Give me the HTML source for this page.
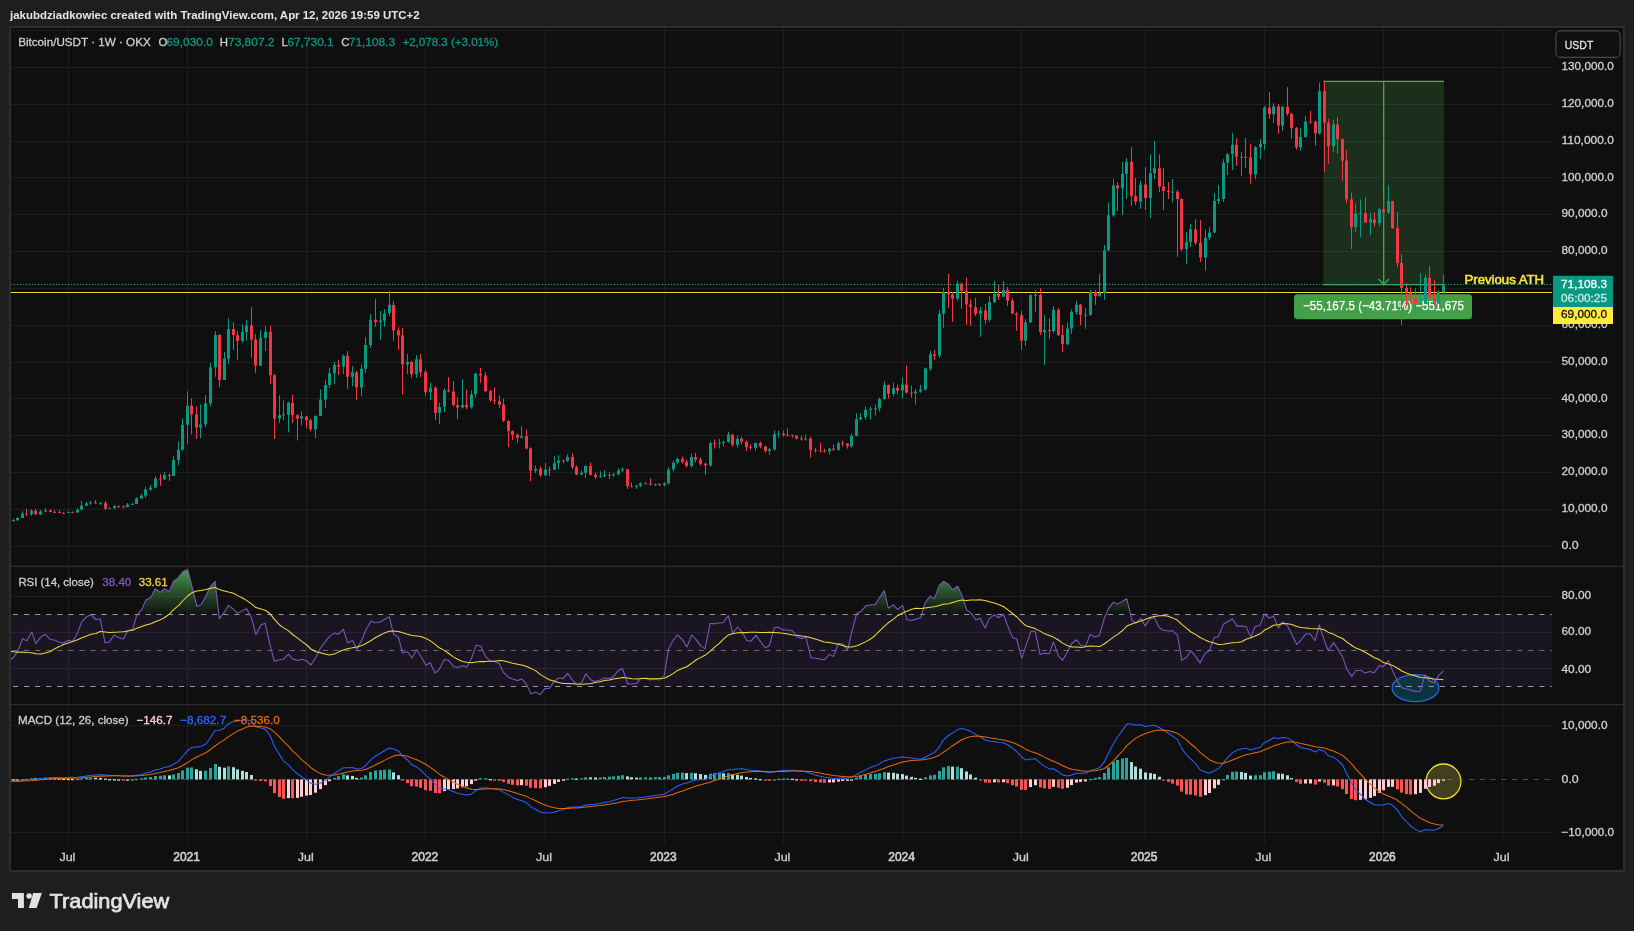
<!DOCTYPE html>
<html lang="en"><head><meta charset="utf-8"><title>BTC/USDT 1W chart</title>
<style>html,body{margin:0;padding:0;background:#1e1e1e;overflow:hidden}svg{display:block;will-change:transform}</style></head>
<body>
<svg width="1634" height="931" viewBox="0 0 1634 931" font-family="'Liberation Sans', sans-serif" style="display:block">
<defs>
<linearGradient id="ob" x1="0" y1="567" x2="0" y2="614.5" gradientUnits="userSpaceOnUse"><stop offset="0" stop-color="#4caf50" stop-opacity="0.95"/><stop offset="0.6" stop-color="#4caf50" stop-opacity="0.33"/><stop offset="1" stop-color="#4caf50" stop-opacity="0.02"/></linearGradient>
<clipPath id="cm"><rect x="11" y="28" width="1541" height="538"/></clipPath>
<clipPath id="cr"><rect x="11" y="567" width="1541" height="137"/></clipPath>
<clipPath id="cob"><rect x="11" y="567" width="1541" height="47.5"/></clipPath>
<clipPath id="cos"><rect x="11" y="686.8" width="1541" height="17.2"/></clipPath>
<clipPath id="cd"><rect x="11" y="705" width="1541" height="138"/></clipPath>
</defs>
<rect width="1634" height="931" fill="#1e1e1e"/>
<rect x="10" y="27" width="1614" height="844" fill="#0f0f0f" stroke="#2e2e2e" stroke-width="2"/>
<line x1="68.5" y1="28" x2="68.5" y2="843" stroke="#1e1e20" stroke-width="1"/>
<line x1="187.5" y1="28" x2="187.5" y2="843" stroke="#1e1e20" stroke-width="1"/>
<line x1="306.5" y1="28" x2="306.5" y2="843" stroke="#1e1e20" stroke-width="1"/>
<line x1="425.5" y1="28" x2="425.5" y2="843" stroke="#1e1e20" stroke-width="1"/>
<line x1="545.5" y1="28" x2="545.5" y2="843" stroke="#1e1e20" stroke-width="1"/>
<line x1="664.5" y1="28" x2="664.5" y2="843" stroke="#1e1e20" stroke-width="1"/>
<line x1="783.5" y1="28" x2="783.5" y2="843" stroke="#1e1e20" stroke-width="1"/>
<line x1="902.5" y1="28" x2="902.5" y2="843" stroke="#1e1e20" stroke-width="1"/>
<line x1="1021.5" y1="28" x2="1021.5" y2="843" stroke="#1e1e20" stroke-width="1"/>
<line x1="1145.5" y1="28" x2="1145.5" y2="843" stroke="#1e1e20" stroke-width="1"/>
<line x1="1264.5" y1="28" x2="1264.5" y2="843" stroke="#1e1e20" stroke-width="1"/>
<line x1="1383.5" y1="28" x2="1383.5" y2="843" stroke="#1e1e20" stroke-width="1"/>
<line x1="1502.5" y1="28" x2="1502.5" y2="843" stroke="#1e1e20" stroke-width="1"/>
<line x1="11" y1="546.5" x2="1552" y2="546.5" stroke="#1e1e20" stroke-width="1"/>
<line x1="11" y1="509.5" x2="1552" y2="509.5" stroke="#1e1e20" stroke-width="1"/>
<line x1="11" y1="472.5" x2="1552" y2="472.5" stroke="#1e1e20" stroke-width="1"/>
<line x1="11" y1="435.5" x2="1552" y2="435.5" stroke="#1e1e20" stroke-width="1"/>
<line x1="11" y1="398.5" x2="1552" y2="398.5" stroke="#1e1e20" stroke-width="1"/>
<line x1="11" y1="362.5" x2="1552" y2="362.5" stroke="#1e1e20" stroke-width="1"/>
<line x1="11" y1="325.5" x2="1552" y2="325.5" stroke="#1e1e20" stroke-width="1"/>
<line x1="11" y1="288.5" x2="1552" y2="288.5" stroke="#1e1e20" stroke-width="1"/>
<line x1="11" y1="251.5" x2="1552" y2="251.5" stroke="#1e1e20" stroke-width="1"/>
<line x1="11" y1="214.5" x2="1552" y2="214.5" stroke="#1e1e20" stroke-width="1"/>
<line x1="11" y1="177.5" x2="1552" y2="177.5" stroke="#1e1e20" stroke-width="1"/>
<line x1="11" y1="141.5" x2="1552" y2="141.5" stroke="#1e1e20" stroke-width="1"/>
<line x1="11" y1="104.5" x2="1552" y2="104.5" stroke="#1e1e20" stroke-width="1"/>
<line x1="11" y1="67.5" x2="1552" y2="67.5" stroke="#1e1e20" stroke-width="1"/>
<line x1="11" y1="30.5" x2="1552" y2="30.5" stroke="#1e1e20" stroke-width="1"/>
<line x1="11" y1="566.3" x2="1623" y2="566.3" stroke="#2e2e2e" stroke-width="1.2"/>
<line x1="11" y1="704.6" x2="1623" y2="704.6" stroke="#2e2e2e" stroke-width="1.2"/>
<rect x="1323.3" y="81.3" width="120.7" height="203.3" fill="#4caf50" fill-opacity="0.2"/>
<line x1="1323.3" y1="81.3" x2="1444.0" y2="81.3" stroke="#4caf50" stroke-width="1.2"/>
<line x1="1323.3" y1="284.6" x2="1444.0" y2="284.6" stroke="#4caf50" stroke-width="1.2"/>
<line x1="1383.7" y1="81.3" x2="1383.7" y2="284.6" stroke="#4caf50" stroke-width="1.2"/>
<path d="M1378.4 279.0 L1383.7 284.3 L1389.0 279.0" fill="none" stroke="#4caf50" stroke-width="1.2"/>
<rect x="1294" y="294.3" width="178" height="25" rx="3.5" fill="#43a047"/>
<text x="1303" y="310.2" font-size="12.3" fill="#fff" stroke="#fff" stroke-width="0.25" textLength="161" lengthAdjust="spacingAndGlyphs">−55,167.5 (−43.71%) −551,675</text>
<line x1="11" y1="292.5" x2="1552" y2="292.5" stroke="#050505" stroke-width="2.4"/>
<line x1="11" y1="292.5" x2="1552" y2="292.5" stroke="#f0dc3a" stroke-width="1.15"/>
<text x="1544" y="283.6" text-anchor="end" font-size="12.2" fill="#fbe43a" stroke="#fbe43a" stroke-width="0.55" textLength="79.5" lengthAdjust="spacingAndGlyphs">Previous ATH</text>
<g clip-path="url(#cm)"><line x1="13.50" y1="518.9" x2="13.50" y2="521.8" stroke="#089981" stroke-width="1"/><rect x="12.00" y="520.1" width="3" height="0.9" fill="#089981"/><line x1="17.50" y1="517.0" x2="17.50" y2="521.1" stroke="#089981" stroke-width="1"/><rect x="16.00" y="518.0" width="3" height="2.1" fill="#089981"/><line x1="22.50" y1="511.1" x2="22.50" y2="518.1" stroke="#089981" stroke-width="1"/><rect x="21.00" y="513.6" width="3" height="4.4" fill="#089981"/><line x1="26.50" y1="509.1" x2="26.50" y2="515.9" stroke="#f23645" stroke-width="1"/><rect x="25.00" y="513.6" width="3" height="0.9" fill="#f23645"/><line x1="31.50" y1="509.1" x2="31.50" y2="515.9" stroke="#089981" stroke-width="1"/><rect x="30.00" y="510.7" width="3" height="3.5" fill="#089981"/><line x1="35.50" y1="508.9" x2="35.50" y2="515.0" stroke="#f23645" stroke-width="1"/><rect x="34.00" y="510.7" width="3" height="3.5" fill="#f23645"/><line x1="40.50" y1="510.0" x2="40.50" y2="515.0" stroke="#089981" stroke-width="1"/><rect x="39.00" y="511.6" width="3" height="2.7" fill="#089981"/><line x1="45.50" y1="508.2" x2="45.50" y2="512.1" stroke="#089981" stroke-width="1"/><rect x="44.00" y="510.5" width="3" height="1.1" fill="#089981"/><line x1="50.50" y1="509.2" x2="50.50" y2="512.1" stroke="#f23645" stroke-width="1"/><rect x="49.00" y="510.5" width="3" height="1.5" fill="#f23645"/><line x1="54.50" y1="510.0" x2="54.50" y2="512.9" stroke="#f23645" stroke-width="1"/><rect x="53.00" y="512.0" width="3" height="0.9" fill="#f23645"/><line x1="59.50" y1="510.2" x2="59.50" y2="512.9" stroke="#f23645" stroke-width="1"/><rect x="58.00" y="512.1" width="3" height="0.9" fill="#f23645"/><line x1="63.50" y1="512.1" x2="63.50" y2="513.0" stroke="#f23645" stroke-width="1"/><rect x="62.00" y="512.8" width="3" height="0.9" fill="#f23645"/><line x1="68.50" y1="511.3" x2="68.50" y2="513.0" stroke="#089981" stroke-width="1"/><rect x="67.00" y="512.1" width="3" height="0.9" fill="#089981"/><line x1="72.50" y1="511.3" x2="72.50" y2="512.5" stroke="#f23645" stroke-width="1"/><rect x="71.00" y="512.1" width="3" height="0.9" fill="#f23645"/><line x1="77.50" y1="508.2" x2="77.50" y2="513.1" stroke="#089981" stroke-width="1"/><rect x="76.00" y="509.8" width="3" height="2.7" fill="#089981"/><line x1="81.50" y1="501.0" x2="81.50" y2="510.0" stroke="#089981" stroke-width="1"/><rect x="80.00" y="505.6" width="3" height="4.2" fill="#089981"/><line x1="86.50" y1="502.1" x2="86.50" y2="505.9" stroke="#089981" stroke-width="1"/><rect x="85.00" y="503.4" width="3" height="2.2" fill="#089981"/><line x1="90.50" y1="501.0" x2="90.50" y2="504.9" stroke="#089981" stroke-width="1"/><rect x="89.00" y="502.5" width="3" height="0.9" fill="#089981"/><line x1="95.50" y1="500.0" x2="95.50" y2="503.8" stroke="#f23645" stroke-width="1"/><rect x="94.00" y="502.5" width="3" height="0.9" fill="#f23645"/><line x1="100.50" y1="502.2" x2="100.50" y2="504.9" stroke="#089981" stroke-width="1"/><rect x="99.00" y="503.2" width="3" height="0.9" fill="#089981"/><line x1="105.50" y1="500.8" x2="105.50" y2="510.0" stroke="#f23645" stroke-width="1"/><rect x="104.00" y="503.2" width="3" height="5.4" fill="#f23645"/><line x1="109.50" y1="507.3" x2="109.50" y2="508.9" stroke="#089981" stroke-width="1"/><rect x="108.00" y="508.3" width="3" height="0.9" fill="#089981"/><line x1="114.50" y1="504.8" x2="114.50" y2="508.8" stroke="#089981" stroke-width="1"/><rect x="113.00" y="506.2" width="3" height="2.2" fill="#089981"/><line x1="118.50" y1="505.4" x2="118.50" y2="507.8" stroke="#f23645" stroke-width="1"/><rect x="117.00" y="506.2" width="3" height="0.9" fill="#f23645"/><line x1="123.50" y1="505.4" x2="123.50" y2="507.8" stroke="#f23645" stroke-width="1"/><rect x="122.00" y="506.7" width="3" height="0.9" fill="#f23645"/><line x1="127.50" y1="503.0" x2="127.50" y2="507.1" stroke="#089981" stroke-width="1"/><rect x="126.00" y="504.5" width="3" height="2.6" fill="#089981"/><line x1="132.50" y1="503.0" x2="132.50" y2="504.9" stroke="#089981" stroke-width="1"/><rect x="131.00" y="504.0" width="3" height="0.9" fill="#089981"/><line x1="136.50" y1="497.1" x2="136.50" y2="504.0" stroke="#089981" stroke-width="1"/><rect x="135.00" y="498.4" width="3" height="5.6" fill="#089981"/><line x1="141.50" y1="493.8" x2="141.50" y2="498.9" stroke="#089981" stroke-width="1"/><rect x="140.00" y="495.7" width="3" height="2.7" fill="#089981"/><line x1="145.50" y1="486.8" x2="145.50" y2="497.8" stroke="#089981" stroke-width="1"/><rect x="144.00" y="489.4" width="3" height="6.3" fill="#089981"/><line x1="150.50" y1="484.9" x2="150.50" y2="490.9" stroke="#089981" stroke-width="1"/><rect x="149.00" y="487.6" width="3" height="1.8" fill="#089981"/><line x1="155.50" y1="476.1" x2="155.50" y2="487.9" stroke="#089981" stroke-width="1"/><rect x="154.00" y="478.6" width="3" height="9.0" fill="#089981"/><line x1="160.50" y1="473.9" x2="160.50" y2="486.0" stroke="#f23645" stroke-width="1"/><rect x="159.00" y="478.6" width="3" height="0.9" fill="#f23645"/><line x1="164.50" y1="472.0" x2="164.50" y2="479.9" stroke="#089981" stroke-width="1"/><rect x="163.00" y="475.1" width="3" height="4.3" fill="#089981"/><line x1="169.50" y1="473.7" x2="169.50" y2="480.9" stroke="#f23645" stroke-width="1"/><rect x="168.00" y="475.1" width="3" height="0.9" fill="#f23645"/><line x1="173.50" y1="456.0" x2="173.50" y2="475.9" stroke="#089981" stroke-width="1"/><rect x="172.00" y="460.0" width="3" height="15.8" fill="#089981"/><line x1="178.50" y1="441.4" x2="178.50" y2="465.1" stroke="#089981" stroke-width="1"/><rect x="177.00" y="449.7" width="3" height="10.3" fill="#089981"/><line x1="182.50" y1="418.4" x2="182.50" y2="451.1" stroke="#089981" stroke-width="1"/><rect x="181.00" y="424.8" width="3" height="24.9" fill="#089981"/><line x1="187.50" y1="391.3" x2="187.50" y2="444.2" stroke="#089981" stroke-width="1"/><rect x="186.00" y="405.7" width="3" height="19.1" fill="#089981"/><line x1="191.50" y1="398.5" x2="191.50" y2="434.2" stroke="#f23645" stroke-width="1"/><rect x="190.00" y="405.7" width="3" height="8.7" fill="#f23645"/><line x1="196.50" y1="406.3" x2="196.50" y2="439.1" stroke="#f23645" stroke-width="1"/><rect x="195.00" y="414.4" width="3" height="13.2" fill="#f23645"/><line x1="200.50" y1="404.5" x2="200.50" y2="438.2" stroke="#089981" stroke-width="1"/><rect x="199.00" y="424.5" width="3" height="3.1" fill="#089981"/><line x1="205.50" y1="395.2" x2="205.50" y2="427.3" stroke="#089981" stroke-width="1"/><rect x="204.00" y="403.4" width="3" height="21.0" fill="#089981"/><line x1="210.50" y1="363.0" x2="210.50" y2="406.3" stroke="#089981" stroke-width="1"/><rect x="209.00" y="367.4" width="3" height="36.0" fill="#089981"/><line x1="215.50" y1="331.1" x2="215.50" y2="376.7" stroke="#089981" stroke-width="1"/><rect x="214.00" y="334.9" width="3" height="32.5" fill="#089981"/><line x1="219.50" y1="334.1" x2="219.50" y2="387.3" stroke="#f23645" stroke-width="1"/><rect x="218.00" y="334.9" width="3" height="45.2" fill="#f23645"/><line x1="224.50" y1="352.1" x2="224.50" y2="380.1" stroke="#089981" stroke-width="1"/><rect x="223.00" y="358.6" width="3" height="21.4" fill="#089981"/><line x1="228.50" y1="318.2" x2="228.50" y2="363.9" stroke="#089981" stroke-width="1"/><rect x="227.00" y="329.0" width="3" height="29.7" fill="#089981"/><line x1="233.50" y1="322.1" x2="233.50" y2="349.9" stroke="#f23645" stroke-width="1"/><rect x="232.00" y="329.0" width="3" height="6.1" fill="#f23645"/><line x1="237.50" y1="331.1" x2="237.50" y2="359.8" stroke="#f23645" stroke-width="1"/><rect x="236.00" y="335.1" width="3" height="5.8" fill="#f23645"/><line x1="242.50" y1="324.2" x2="242.50" y2="342.9" stroke="#089981" stroke-width="1"/><rect x="241.00" y="331.9" width="3" height="8.9" fill="#089981"/><line x1="246.50" y1="320.2" x2="246.50" y2="340.7" stroke="#089981" stroke-width="1"/><rect x="245.00" y="325.4" width="3" height="6.6" fill="#089981"/><line x1="251.50" y1="307.1" x2="251.50" y2="357.9" stroke="#f23645" stroke-width="1"/><rect x="250.00" y="325.4" width="3" height="14.1" fill="#f23645"/><line x1="255.50" y1="334.1" x2="255.50" y2="372.9" stroke="#f23645" stroke-width="1"/><rect x="254.00" y="339.5" width="3" height="26.1" fill="#f23645"/><line x1="260.50" y1="330.0" x2="260.50" y2="366.0" stroke="#089981" stroke-width="1"/><rect x="259.00" y="337.9" width="3" height="27.7" fill="#089981"/><line x1="265.50" y1="326.0" x2="265.50" y2="351.0" stroke="#089981" stroke-width="1"/><rect x="264.00" y="331.8" width="3" height="6.1" fill="#089981"/><line x1="270.50" y1="326.0" x2="270.50" y2="384.3" stroke="#f23645" stroke-width="1"/><rect x="269.00" y="331.8" width="3" height="43.5" fill="#f23645"/><line x1="274.50" y1="373.9" x2="274.50" y2="439.1" stroke="#f23645" stroke-width="1"/><rect x="273.00" y="375.3" width="3" height="43.4" fill="#f23645"/><line x1="279.50" y1="395.2" x2="279.50" y2="423.2" stroke="#089981" stroke-width="1"/><rect x="278.00" y="415.1" width="3" height="3.6" fill="#089981"/><line x1="283.50" y1="400.4" x2="283.50" y2="420.3" stroke="#089981" stroke-width="1"/><rect x="282.00" y="414.5" width="3" height="0.9" fill="#089981"/><line x1="288.50" y1="401.5" x2="288.50" y2="432.4" stroke="#089981" stroke-width="1"/><rect x="287.00" y="402.7" width="3" height="11.8" fill="#089981"/><line x1="292.50" y1="394.5" x2="292.50" y2="423.2" stroke="#f23645" stroke-width="1"/><rect x="291.00" y="402.7" width="3" height="12.5" fill="#f23645"/><line x1="297.50" y1="414.4" x2="297.50" y2="440.4" stroke="#f23645" stroke-width="1"/><rect x="296.00" y="415.2" width="3" height="3.4" fill="#f23645"/><line x1="301.50" y1="411.4" x2="301.50" y2="425.3" stroke="#089981" stroke-width="1"/><rect x="300.00" y="416.4" width="3" height="2.2" fill="#089981"/><line x1="306.50" y1="416.3" x2="306.50" y2="428.3" stroke="#f23645" stroke-width="1"/><rect x="305.00" y="416.4" width="3" height="3.8" fill="#f23645"/><line x1="310.50" y1="418.4" x2="310.50" y2="431.3" stroke="#f23645" stroke-width="1"/><rect x="309.00" y="420.2" width="3" height="9.1" fill="#f23645"/><line x1="315.50" y1="415.2" x2="315.50" y2="438.2" stroke="#089981" stroke-width="1"/><rect x="314.00" y="416.0" width="3" height="13.3" fill="#089981"/><line x1="320.50" y1="389.4" x2="320.50" y2="416.3" stroke="#089981" stroke-width="1"/><rect x="319.00" y="399.6" width="3" height="16.4" fill="#089981"/><line x1="325.50" y1="379.4" x2="325.50" y2="408.1" stroke="#089981" stroke-width="1"/><rect x="324.00" y="385.0" width="3" height="14.6" fill="#089981"/><line x1="329.50" y1="367.8" x2="329.50" y2="388.0" stroke="#089981" stroke-width="1"/><rect x="328.00" y="373.2" width="3" height="11.8" fill="#089981"/><line x1="334.50" y1="361.9" x2="334.50" y2="384.3" stroke="#089981" stroke-width="1"/><rect x="333.00" y="364.9" width="3" height="8.3" fill="#089981"/><line x1="338.50" y1="359.8" x2="338.50" y2="375.0" stroke="#f23645" stroke-width="1"/><rect x="337.00" y="364.9" width="3" height="1.8" fill="#f23645"/><line x1="343.50" y1="354.4" x2="343.50" y2="374.0" stroke="#089981" stroke-width="1"/><rect x="342.00" y="355.7" width="3" height="11.0" fill="#089981"/><line x1="347.50" y1="351.1" x2="347.50" y2="389.0" stroke="#f23645" stroke-width="1"/><rect x="346.00" y="355.7" width="3" height="21.1" fill="#f23645"/><line x1="352.50" y1="366.2" x2="352.50" y2="386.0" stroke="#089981" stroke-width="1"/><rect x="351.00" y="372.3" width="3" height="4.5" fill="#089981"/><line x1="356.50" y1="371.0" x2="356.50" y2="400.3" stroke="#f23645" stroke-width="1"/><rect x="355.00" y="372.3" width="3" height="15.0" fill="#f23645"/><line x1="361.50" y1="364.4" x2="361.50" y2="396.3" stroke="#089981" stroke-width="1"/><rect x="360.00" y="368.8" width="3" height="18.6" fill="#089981"/><line x1="365.50" y1="337.1" x2="365.50" y2="373.0" stroke="#089981" stroke-width="1"/><rect x="364.00" y="345.0" width="3" height="23.8" fill="#089981"/><line x1="370.50" y1="314.0" x2="370.50" y2="347.9" stroke="#089981" stroke-width="1"/><rect x="369.00" y="319.8" width="3" height="25.2" fill="#089981"/><line x1="375.50" y1="298.9" x2="375.50" y2="326.9" stroke="#f23645" stroke-width="1"/><rect x="374.00" y="319.8" width="3" height="2.4" fill="#f23645"/><line x1="380.50" y1="311.0" x2="380.50" y2="340.0" stroke="#089981" stroke-width="1"/><rect x="379.00" y="320.5" width="3" height="1.6" fill="#089981"/><line x1="384.50" y1="309.2" x2="384.50" y2="326.9" stroke="#089981" stroke-width="1"/><rect x="383.00" y="313.3" width="3" height="7.3" fill="#089981"/><line x1="389.50" y1="290.9" x2="389.50" y2="316.2" stroke="#089981" stroke-width="1"/><rect x="388.00" y="305.0" width="3" height="8.2" fill="#089981"/><line x1="393.50" y1="301.1" x2="393.50" y2="340.9" stroke="#f23645" stroke-width="1"/><rect x="392.00" y="305.0" width="3" height="25.4" fill="#f23645"/><line x1="398.50" y1="327.1" x2="398.50" y2="350.0" stroke="#f23645" stroke-width="1"/><rect x="397.00" y="330.4" width="3" height="5.0" fill="#f23645"/><line x1="402.50" y1="328.0" x2="402.50" y2="394.2" stroke="#f23645" stroke-width="1"/><rect x="401.00" y="335.4" width="3" height="29.0" fill="#f23645"/><line x1="407.50" y1="354.0" x2="407.50" y2="374.0" stroke="#089981" stroke-width="1"/><rect x="406.00" y="362.0" width="3" height="2.4" fill="#089981"/><line x1="411.50" y1="360.9" x2="411.50" y2="378.0" stroke="#f23645" stroke-width="1"/><rect x="410.00" y="362.0" width="3" height="12.4" fill="#f23645"/><line x1="416.50" y1="355.1" x2="416.50" y2="378.0" stroke="#089981" stroke-width="1"/><rect x="415.00" y="359.3" width="3" height="15.1" fill="#089981"/><line x1="420.50" y1="354.0" x2="420.50" y2="376.9" stroke="#f23645" stroke-width="1"/><rect x="419.00" y="359.3" width="3" height="12.9" fill="#f23645"/><line x1="425.50" y1="370.0" x2="425.50" y2="396.3" stroke="#f23645" stroke-width="1"/><rect x="424.00" y="372.1" width="3" height="20.0" fill="#f23645"/><line x1="430.50" y1="382.5" x2="430.50" y2="400.3" stroke="#089981" stroke-width="1"/><rect x="429.00" y="387.7" width="3" height="4.5" fill="#089981"/><line x1="435.50" y1="386.3" x2="435.50" y2="420.2" stroke="#f23645" stroke-width="1"/><rect x="434.00" y="387.7" width="3" height="25.2" fill="#f23645"/><line x1="439.50" y1="402.4" x2="439.50" y2="424.3" stroke="#089981" stroke-width="1"/><rect x="438.00" y="406.8" width="3" height="6.0" fill="#089981"/><line x1="444.50" y1="388.5" x2="444.50" y2="412.1" stroke="#089981" stroke-width="1"/><rect x="443.00" y="390.2" width="3" height="16.6" fill="#089981"/><line x1="448.50" y1="376.9" x2="448.50" y2="392.4" stroke="#f23645" stroke-width="1"/><rect x="447.00" y="390.2" width="3" height="1.2" fill="#f23645"/><line x1="453.50" y1="381.3" x2="453.50" y2="406.4" stroke="#f23645" stroke-width="1"/><rect x="452.00" y="391.4" width="3" height="13.6" fill="#f23645"/><line x1="457.50" y1="397.4" x2="457.50" y2="419.3" stroke="#f23645" stroke-width="1"/><rect x="456.00" y="405.1" width="3" height="2.4" fill="#f23645"/><line x1="462.50" y1="379.1" x2="462.50" y2="408.6" stroke="#089981" stroke-width="1"/><rect x="461.00" y="404.9" width="3" height="2.6" fill="#089981"/><line x1="466.50" y1="389.5" x2="466.50" y2="409.4" stroke="#f23645" stroke-width="1"/><rect x="465.00" y="404.9" width="3" height="2.3" fill="#f23645"/><line x1="471.50" y1="390.3" x2="471.50" y2="408.6" stroke="#089981" stroke-width="1"/><rect x="470.00" y="394.4" width="3" height="12.8" fill="#089981"/><line x1="475.50" y1="372.9" x2="475.50" y2="397.4" stroke="#089981" stroke-width="1"/><rect x="474.00" y="373.8" width="3" height="20.5" fill="#089981"/><line x1="480.50" y1="368.0" x2="480.50" y2="383.1" stroke="#f23645" stroke-width="1"/><rect x="479.00" y="373.8" width="3" height="1.6" fill="#f23645"/><line x1="485.50" y1="372.1" x2="485.50" y2="392.2" stroke="#f23645" stroke-width="1"/><rect x="484.00" y="375.4" width="3" height="15.7" fill="#f23645"/><line x1="490.50" y1="389.9" x2="490.50" y2="401.7" stroke="#f23645" stroke-width="1"/><rect x="489.00" y="391.1" width="3" height="9.1" fill="#f23645"/><line x1="494.50" y1="387.4" x2="494.50" y2="404.3" stroke="#f23645" stroke-width="1"/><rect x="493.00" y="400.2" width="3" height="0.9" fill="#f23645"/><line x1="499.50" y1="395.4" x2="499.50" y2="408.4" stroke="#f23645" stroke-width="1"/><rect x="498.00" y="401.1" width="3" height="3.6" fill="#f23645"/><line x1="503.50" y1="398.5" x2="503.50" y2="422.3" stroke="#f23645" stroke-width="1"/><rect x="502.00" y="404.6" width="3" height="16.3" fill="#f23645"/><line x1="508.50" y1="420.2" x2="508.50" y2="447.1" stroke="#f23645" stroke-width="1"/><rect x="507.00" y="421.0" width="3" height="10.1" fill="#f23645"/><line x1="512.50" y1="430.2" x2="512.50" y2="440.1" stroke="#f23645" stroke-width="1"/><rect x="511.00" y="431.1" width="3" height="3.7" fill="#f23645"/><line x1="517.50" y1="433.4" x2="517.50" y2="443.0" stroke="#f23645" stroke-width="1"/><rect x="516.00" y="434.8" width="3" height="3.0" fill="#f23645"/><line x1="521.50" y1="426.2" x2="521.50" y2="438.2" stroke="#089981" stroke-width="1"/><rect x="520.00" y="436.2" width="3" height="1.6" fill="#089981"/><line x1="526.50" y1="429.4" x2="526.50" y2="449.3" stroke="#f23645" stroke-width="1"/><rect x="525.00" y="436.2" width="3" height="12.3" fill="#f23645"/><line x1="530.50" y1="447.3" x2="530.50" y2="481.3" stroke="#f23645" stroke-width="1"/><rect x="529.00" y="448.5" width="3" height="22.1" fill="#f23645"/><line x1="535.50" y1="465.4" x2="535.50" y2="473.1" stroke="#089981" stroke-width="1"/><rect x="534.00" y="468.9" width="3" height="1.7" fill="#089981"/><line x1="540.50" y1="466.5" x2="540.50" y2="477.0" stroke="#f23645" stroke-width="1"/><rect x="539.00" y="468.9" width="3" height="6.4" fill="#f23645"/><line x1="545.50" y1="463.2" x2="545.50" y2="476.3" stroke="#089981" stroke-width="1"/><rect x="544.00" y="469.5" width="3" height="5.7" fill="#089981"/><line x1="549.50" y1="466.5" x2="549.50" y2="476.1" stroke="#f23645" stroke-width="1"/><rect x="548.00" y="469.5" width="3" height="0.9" fill="#f23645"/><line x1="554.50" y1="456.3" x2="554.50" y2="470.1" stroke="#089981" stroke-width="1"/><rect x="553.00" y="463.2" width="3" height="6.6" fill="#089981"/><line x1="558.50" y1="455.2" x2="558.50" y2="469.1" stroke="#089981" stroke-width="1"/><rect x="557.00" y="460.5" width="3" height="2.7" fill="#089981"/><line x1="563.50" y1="459.5" x2="563.50" y2="463.2" stroke="#f23645" stroke-width="1"/><rect x="562.00" y="460.5" width="3" height="0.9" fill="#f23645"/><line x1="567.50" y1="454.4" x2="567.50" y2="462.2" stroke="#089981" stroke-width="1"/><rect x="566.00" y="456.9" width="3" height="4.2" fill="#089981"/><line x1="572.50" y1="453.4" x2="572.50" y2="469.1" stroke="#f23645" stroke-width="1"/><rect x="571.00" y="456.9" width="3" height="10.2" fill="#f23645"/><line x1="576.50" y1="465.4" x2="576.50" y2="475.3" stroke="#f23645" stroke-width="1"/><rect x="575.00" y="467.1" width="3" height="7.3" fill="#f23645"/><line x1="581.50" y1="470.2" x2="581.50" y2="475.3" stroke="#089981" stroke-width="1"/><rect x="580.00" y="472.7" width="3" height="1.7" fill="#089981"/><line x1="585.50" y1="465.2" x2="585.50" y2="478.1" stroke="#089981" stroke-width="1"/><rect x="584.00" y="466.0" width="3" height="6.7" fill="#089981"/><line x1="590.50" y1="462.4" x2="590.50" y2="475.3" stroke="#f23645" stroke-width="1"/><rect x="589.00" y="466.0" width="3" height="8.9" fill="#f23645"/><line x1="595.50" y1="472.4" x2="595.50" y2="479.1" stroke="#f23645" stroke-width="1"/><rect x="594.00" y="474.8" width="3" height="2.3" fill="#f23645"/><line x1="600.50" y1="471.3" x2="600.50" y2="478.1" stroke="#089981" stroke-width="1"/><rect x="599.00" y="476.2" width="3" height="0.9" fill="#089981"/><line x1="604.50" y1="470.2" x2="604.50" y2="477.2" stroke="#089981" stroke-width="1"/><rect x="603.00" y="474.8" width="3" height="1.4" fill="#089981"/><line x1="609.50" y1="472.4" x2="609.50" y2="479.1" stroke="#f23645" stroke-width="1"/><rect x="608.00" y="474.8" width="3" height="0.9" fill="#f23645"/><line x1="613.50" y1="473.1" x2="613.50" y2="477.2" stroke="#089981" stroke-width="1"/><rect x="612.00" y="474.3" width="3" height="1.1" fill="#089981"/><line x1="618.50" y1="468.4" x2="618.50" y2="475.3" stroke="#089981" stroke-width="1"/><rect x="617.00" y="470.4" width="3" height="3.9" fill="#089981"/><line x1="622.50" y1="467.3" x2="622.50" y2="472.0" stroke="#089981" stroke-width="1"/><rect x="621.00" y="469.3" width="3" height="1.1" fill="#089981"/><line x1="627.50" y1="468.6" x2="627.50" y2="489.0" stroke="#f23645" stroke-width="1"/><rect x="626.00" y="469.3" width="3" height="16.9" fill="#f23645"/><line x1="631.50" y1="482.4" x2="631.50" y2="487.3" stroke="#f23645" stroke-width="1"/><rect x="630.00" y="486.2" width="3" height="0.9" fill="#f23645"/><line x1="636.50" y1="484.5" x2="636.50" y2="489.0" stroke="#089981" stroke-width="1"/><rect x="635.00" y="485.9" width="3" height="0.9" fill="#089981"/><line x1="640.50" y1="482.4" x2="640.50" y2="487.1" stroke="#089981" stroke-width="1"/><rect x="639.00" y="483.3" width="3" height="2.6" fill="#089981"/><line x1="645.50" y1="482.4" x2="645.50" y2="484.2" stroke="#f23645" stroke-width="1"/><rect x="644.00" y="483.3" width="3" height="0.9" fill="#f23645"/><line x1="650.50" y1="478.3" x2="650.50" y2="485.5" stroke="#f23645" stroke-width="1"/><rect x="649.00" y="483.4" width="3" height="1.3" fill="#f23645"/><line x1="655.50" y1="483.4" x2="655.50" y2="486.0" stroke="#089981" stroke-width="1"/><rect x="654.00" y="484.3" width="3" height="0.9" fill="#089981"/><line x1="659.50" y1="483.4" x2="659.50" y2="486.0" stroke="#f23645" stroke-width="1"/><rect x="658.00" y="484.3" width="3" height="0.9" fill="#f23645"/><line x1="664.50" y1="482.4" x2="664.50" y2="486.2" stroke="#089981" stroke-width="1"/><rect x="663.00" y="483.3" width="3" height="1.9" fill="#089981"/><line x1="668.50" y1="467.3" x2="668.50" y2="484.4" stroke="#089981" stroke-width="1"/><rect x="667.00" y="469.5" width="3" height="13.8" fill="#089981"/><line x1="673.50" y1="460.6" x2="673.50" y2="471.5" stroke="#089981" stroke-width="1"/><rect x="672.00" y="462.7" width="3" height="6.7" fill="#089981"/><line x1="677.50" y1="457.5" x2="677.50" y2="463.7" stroke="#089981" stroke-width="1"/><rect x="676.00" y="458.9" width="3" height="3.8" fill="#089981"/><line x1="682.50" y1="456.5" x2="682.50" y2="463.5" stroke="#f23645" stroke-width="1"/><rect x="681.00" y="458.9" width="3" height="3.0" fill="#f23645"/><line x1="686.50" y1="459.7" x2="686.50" y2="467.4" stroke="#f23645" stroke-width="1"/><rect x="685.00" y="461.9" width="3" height="4.2" fill="#f23645"/><line x1="691.50" y1="453.5" x2="691.50" y2="467.4" stroke="#089981" stroke-width="1"/><rect x="690.00" y="457.0" width="3" height="9.1" fill="#089981"/><line x1="695.50" y1="452.7" x2="695.50" y2="462.4" stroke="#f23645" stroke-width="1"/><rect x="694.00" y="457.0" width="3" height="2.6" fill="#f23645"/><line x1="700.50" y1="457.5" x2="700.50" y2="465.6" stroke="#f23645" stroke-width="1"/><rect x="699.00" y="459.6" width="3" height="4.2" fill="#f23645"/><line x1="705.50" y1="462.7" x2="705.50" y2="474.5" stroke="#f23645" stroke-width="1"/><rect x="704.00" y="463.7" width="3" height="1.6" fill="#f23645"/><line x1="710.50" y1="441.7" x2="710.50" y2="466.6" stroke="#089981" stroke-width="1"/><rect x="709.00" y="443.2" width="3" height="22.1" fill="#089981"/><line x1="714.50" y1="439.5" x2="714.50" y2="448.4" stroke="#f23645" stroke-width="1"/><rect x="713.00" y="443.2" width="3" height="0.9" fill="#f23645"/><line x1="719.50" y1="438.8" x2="719.50" y2="448.4" stroke="#089981" stroke-width="1"/><rect x="718.00" y="442.6" width="3" height="0.9" fill="#089981"/><line x1="723.50" y1="440.6" x2="723.50" y2="446.6" stroke="#089981" stroke-width="1"/><rect x="722.00" y="442.0" width="3" height="0.9" fill="#089981"/><line x1="728.50" y1="431.6" x2="728.50" y2="442.7" stroke="#089981" stroke-width="1"/><rect x="727.00" y="434.7" width="3" height="7.3" fill="#089981"/><line x1="732.50" y1="433.7" x2="732.50" y2="446.6" stroke="#f23645" stroke-width="1"/><rect x="731.00" y="434.7" width="3" height="10.0" fill="#f23645"/><line x1="737.50" y1="435.5" x2="737.50" y2="447.7" stroke="#089981" stroke-width="1"/><rect x="736.00" y="438.7" width="3" height="6.0" fill="#089981"/><line x1="741.50" y1="436.6" x2="741.50" y2="444.4" stroke="#f23645" stroke-width="1"/><rect x="740.00" y="438.7" width="3" height="2.9" fill="#f23645"/><line x1="746.50" y1="440.6" x2="746.50" y2="451.3" stroke="#f23645" stroke-width="1"/><rect x="745.00" y="441.6" width="3" height="5.6" fill="#f23645"/><line x1="750.50" y1="444.4" x2="750.50" y2="449.5" stroke="#f23645" stroke-width="1"/><rect x="749.00" y="447.2" width="3" height="0.9" fill="#f23645"/><line x1="755.50" y1="442.5" x2="755.50" y2="450.6" stroke="#089981" stroke-width="1"/><rect x="754.00" y="443.0" width="3" height="4.9" fill="#089981"/><line x1="760.50" y1="441.4" x2="760.50" y2="448.4" stroke="#f23645" stroke-width="1"/><rect x="759.00" y="443.0" width="3" height="3.5" fill="#f23645"/><line x1="765.50" y1="445.7" x2="765.50" y2="452.7" stroke="#f23645" stroke-width="1"/><rect x="764.00" y="446.5" width="3" height="4.4" fill="#f23645"/><line x1="769.50" y1="447.7" x2="769.50" y2="454.5" stroke="#089981" stroke-width="1"/><rect x="768.00" y="449.3" width="3" height="1.5" fill="#089981"/><line x1="774.50" y1="430.7" x2="774.50" y2="450.8" stroke="#089981" stroke-width="1"/><rect x="773.00" y="434.1" width="3" height="15.2" fill="#089981"/><line x1="778.50" y1="430.7" x2="778.50" y2="437.7" stroke="#089981" stroke-width="1"/><rect x="777.00" y="433.6" width="3" height="0.9" fill="#089981"/><line x1="783.50" y1="430.7" x2="783.50" y2="436.6" stroke="#f23645" stroke-width="1"/><rect x="782.00" y="433.6" width="3" height="1.7" fill="#f23645"/><line x1="787.50" y1="428.5" x2="787.50" y2="436.6" stroke="#089981" stroke-width="1"/><rect x="786.00" y="435.0" width="3" height="0.9" fill="#089981"/><line x1="792.50" y1="434.6" x2="792.50" y2="437.7" stroke="#f23645" stroke-width="1"/><rect x="791.00" y="435.0" width="3" height="0.9" fill="#f23645"/><line x1="796.50" y1="435.5" x2="796.50" y2="439.7" stroke="#f23645" stroke-width="1"/><rect x="795.00" y="435.6" width="3" height="2.9" fill="#f23645"/><line x1="801.50" y1="435.5" x2="801.50" y2="440.6" stroke="#f23645" stroke-width="1"/><rect x="800.00" y="438.5" width="3" height="0.9" fill="#f23645"/><line x1="805.50" y1="434.5" x2="805.50" y2="440.6" stroke="#089981" stroke-width="1"/><rect x="804.00" y="438.5" width="3" height="0.9" fill="#089981"/><line x1="810.50" y1="436.6" x2="810.50" y2="457.5" stroke="#f23645" stroke-width="1"/><rect x="809.00" y="438.5" width="3" height="11.4" fill="#f23645"/><line x1="815.50" y1="447.7" x2="815.50" y2="452.7" stroke="#f23645" stroke-width="1"/><rect x="814.00" y="449.9" width="3" height="0.9" fill="#f23645"/><line x1="820.50" y1="442.5" x2="820.50" y2="452.7" stroke="#f23645" stroke-width="1"/><rect x="819.00" y="450.3" width="3" height="0.9" fill="#f23645"/><line x1="824.50" y1="448.7" x2="824.50" y2="452.7" stroke="#f23645" stroke-width="1"/><rect x="823.00" y="450.7" width="3" height="0.9" fill="#f23645"/><line x1="829.50" y1="447.7" x2="829.50" y2="454.5" stroke="#089981" stroke-width="1"/><rect x="828.00" y="448.6" width="3" height="2.6" fill="#089981"/><line x1="833.50" y1="444.4" x2="833.50" y2="450.8" stroke="#f23645" stroke-width="1"/><rect x="832.00" y="448.6" width="3" height="1.0" fill="#f23645"/><line x1="838.50" y1="441.6" x2="838.50" y2="450.8" stroke="#089981" stroke-width="1"/><rect x="837.00" y="443.3" width="3" height="6.4" fill="#089981"/><line x1="842.50" y1="440.6" x2="842.50" y2="446.5" stroke="#f23645" stroke-width="1"/><rect x="841.00" y="443.3" width="3" height="0.9" fill="#f23645"/><line x1="847.50" y1="443.3" x2="847.50" y2="448.6" stroke="#f23645" stroke-width="1"/><rect x="846.00" y="443.5" width="3" height="2.8" fill="#f23645"/><line x1="851.50" y1="433.6" x2="851.50" y2="447.8" stroke="#089981" stroke-width="1"/><rect x="850.00" y="435.9" width="3" height="10.4" fill="#089981"/><line x1="856.50" y1="413.4" x2="856.50" y2="436.8" stroke="#089981" stroke-width="1"/><rect x="855.00" y="419.2" width="3" height="16.7" fill="#089981"/><line x1="860.50" y1="413.4" x2="860.50" y2="420.7" stroke="#089981" stroke-width="1"/><rect x="859.00" y="417.3" width="3" height="1.9" fill="#089981"/><line x1="865.50" y1="406.5" x2="865.50" y2="419.6" stroke="#089981" stroke-width="1"/><rect x="864.00" y="409.8" width="3" height="7.5" fill="#089981"/><line x1="870.50" y1="406.5" x2="870.50" y2="419.6" stroke="#089981" stroke-width="1"/><rect x="869.00" y="408.7" width="3" height="1.1" fill="#089981"/><line x1="875.50" y1="404.6" x2="875.50" y2="415.5" stroke="#089981" stroke-width="1"/><rect x="874.00" y="408.4" width="3" height="0.9" fill="#089981"/><line x1="879.50" y1="397.6" x2="879.50" y2="411.6" stroke="#089981" stroke-width="1"/><rect x="878.00" y="399.1" width="3" height="9.3" fill="#089981"/><line x1="884.50" y1="381.5" x2="884.50" y2="399.6" stroke="#089981" stroke-width="1"/><rect x="883.00" y="385.0" width="3" height="14.1" fill="#089981"/><line x1="888.50" y1="384.5" x2="888.50" y2="398.7" stroke="#f23645" stroke-width="1"/><rect x="887.00" y="385.0" width="3" height="8.9" fill="#f23645"/><line x1="893.50" y1="382.6" x2="893.50" y2="396.5" stroke="#089981" stroke-width="1"/><rect x="892.00" y="387.9" width="3" height="6.0" fill="#089981"/><line x1="897.50" y1="384.7" x2="897.50" y2="394.4" stroke="#f23645" stroke-width="1"/><rect x="896.00" y="387.9" width="3" height="2.7" fill="#f23645"/><line x1="902.50" y1="377.5" x2="902.50" y2="398.4" stroke="#089981" stroke-width="1"/><rect x="901.00" y="384.5" width="3" height="6.1" fill="#089981"/><line x1="906.50" y1="365.4" x2="906.50" y2="393.5" stroke="#f23645" stroke-width="1"/><rect x="905.00" y="384.5" width="3" height="8.1" fill="#f23645"/><line x1="911.50" y1="385.5" x2="911.50" y2="397.6" stroke="#f23645" stroke-width="1"/><rect x="910.00" y="392.6" width="3" height="0.9" fill="#f23645"/><line x1="915.50" y1="388.7" x2="915.50" y2="404.6" stroke="#089981" stroke-width="1"/><rect x="914.00" y="391.5" width="3" height="1.7" fill="#089981"/><line x1="920.50" y1="384.7" x2="920.50" y2="392.8" stroke="#089981" stroke-width="1"/><rect x="919.00" y="389.5" width="3" height="2.0" fill="#089981"/><line x1="925.50" y1="367.5" x2="925.50" y2="390.6" stroke="#089981" stroke-width="1"/><rect x="924.00" y="368.4" width="3" height="21.1" fill="#089981"/><line x1="930.50" y1="350.9" x2="930.50" y2="370.7" stroke="#089981" stroke-width="1"/><rect x="929.00" y="354.3" width="3" height="14.2" fill="#089981"/><line x1="934.50" y1="349.8" x2="934.50" y2="359.8" stroke="#f23645" stroke-width="1"/><rect x="933.00" y="354.3" width="3" height="1.5" fill="#f23645"/><line x1="939.50" y1="310.0" x2="939.50" y2="358.0" stroke="#089981" stroke-width="1"/><rect x="938.00" y="313.8" width="3" height="41.9" fill="#089981"/><line x1="943.50" y1="287.8" x2="943.50" y2="327.9" stroke="#089981" stroke-width="1"/><rect x="942.00" y="292.1" width="3" height="21.7" fill="#089981"/><line x1="948.50" y1="273.8" x2="948.50" y2="307.9" stroke="#f23645" stroke-width="1"/><rect x="947.00" y="292.1" width="3" height="2.2" fill="#f23645"/><line x1="952.50" y1="292.1" x2="952.50" y2="321.9" stroke="#f23645" stroke-width="1"/><rect x="951.00" y="294.4" width="3" height="4.3" fill="#f23645"/><line x1="957.50" y1="280.8" x2="957.50" y2="300.7" stroke="#089981" stroke-width="1"/><rect x="956.00" y="283.7" width="3" height="15.0" fill="#089981"/><line x1="961.50" y1="282.8" x2="961.50" y2="309.0" stroke="#f23645" stroke-width="1"/><rect x="960.00" y="283.7" width="3" height="7.1" fill="#f23645"/><line x1="966.50" y1="277.8" x2="966.50" y2="324.9" stroke="#f23645" stroke-width="1"/><rect x="965.00" y="290.8" width="3" height="13.6" fill="#f23645"/><line x1="970.50" y1="298.9" x2="970.50" y2="325.9" stroke="#f23645" stroke-width="1"/><rect x="969.00" y="304.4" width="3" height="2.7" fill="#f23645"/><line x1="975.50" y1="298.0" x2="975.50" y2="316.1" stroke="#f23645" stroke-width="1"/><rect x="974.00" y="307.1" width="3" height="6.7" fill="#f23645"/><line x1="980.50" y1="306.8" x2="980.50" y2="336.9" stroke="#089981" stroke-width="1"/><rect x="979.00" y="310.5" width="3" height="3.3" fill="#089981"/><line x1="985.50" y1="303.9" x2="985.50" y2="324.0" stroke="#f23645" stroke-width="1"/><rect x="984.00" y="310.5" width="3" height="9.3" fill="#f23645"/><line x1="989.50" y1="296.1" x2="989.50" y2="321.9" stroke="#089981" stroke-width="1"/><rect x="988.00" y="302.2" width="3" height="17.7" fill="#089981"/><line x1="994.50" y1="280.8" x2="994.50" y2="303.1" stroke="#089981" stroke-width="1"/><rect x="993.00" y="293.9" width="3" height="8.3" fill="#089981"/><line x1="998.50" y1="284.9" x2="998.50" y2="299.9" stroke="#f23645" stroke-width="1"/><rect x="997.00" y="293.9" width="3" height="2.8" fill="#f23645"/><line x1="1003.50" y1="280.8" x2="1003.50" y2="297.2" stroke="#089981" stroke-width="1"/><rect x="1002.00" y="289.8" width="3" height="7.0" fill="#089981"/><line x1="1007.50" y1="287.0" x2="1007.50" y2="306.0" stroke="#f23645" stroke-width="1"/><rect x="1006.00" y="289.8" width="3" height="10.9" fill="#f23645"/><line x1="1012.50" y1="298.1" x2="1012.50" y2="314.0" stroke="#f23645" stroke-width="1"/><rect x="1011.00" y="300.7" width="3" height="12.9" fill="#f23645"/><line x1="1016.50" y1="312.1" x2="1016.50" y2="331.0" stroke="#f23645" stroke-width="1"/><rect x="1015.00" y="313.6" width="3" height="1.5" fill="#f23645"/><line x1="1021.50" y1="311.0" x2="1021.50" y2="350.0" stroke="#f23645" stroke-width="1"/><rect x="1020.00" y="315.1" width="3" height="25.5" fill="#f23645"/><line x1="1025.50" y1="319.2" x2="1025.50" y2="346.0" stroke="#089981" stroke-width="1"/><rect x="1024.00" y="322.4" width="3" height="18.2" fill="#089981"/><line x1="1030.50" y1="294.1" x2="1030.50" y2="323.0" stroke="#089981" stroke-width="1"/><rect x="1029.00" y="295.3" width="3" height="27.1" fill="#089981"/><line x1="1035.50" y1="290.2" x2="1035.50" y2="311.9" stroke="#089981" stroke-width="1"/><rect x="1034.00" y="294.9" width="3" height="0.9" fill="#089981"/><line x1="1040.50" y1="288.2" x2="1040.50" y2="335.0" stroke="#f23645" stroke-width="1"/><rect x="1039.00" y="294.9" width="3" height="37.3" fill="#f23645"/><line x1="1044.50" y1="315.1" x2="1044.50" y2="365.0" stroke="#089981" stroke-width="1"/><rect x="1043.00" y="330.1" width="3" height="2.2" fill="#089981"/><line x1="1049.50" y1="318.1" x2="1049.50" y2="338.9" stroke="#f23645" stroke-width="1"/><rect x="1048.00" y="330.1" width="3" height="1.0" fill="#f23645"/><line x1="1053.50" y1="306.0" x2="1053.50" y2="332.8" stroke="#089981" stroke-width="1"/><rect x="1052.00" y="309.7" width="3" height="21.3" fill="#089981"/><line x1="1058.50" y1="308.1" x2="1058.50" y2="335.9" stroke="#f23645" stroke-width="1"/><rect x="1057.00" y="309.7" width="3" height="25.5" fill="#f23645"/><line x1="1062.50" y1="325.0" x2="1062.50" y2="351.8" stroke="#f23645" stroke-width="1"/><rect x="1061.00" y="335.2" width="3" height="9.0" fill="#f23645"/><line x1="1067.50" y1="322.1" x2="1067.50" y2="345.2" stroke="#089981" stroke-width="1"/><rect x="1066.00" y="328.5" width="3" height="15.7" fill="#089981"/><line x1="1071.50" y1="309.2" x2="1071.50" y2="333.9" stroke="#089981" stroke-width="1"/><rect x="1070.00" y="312.1" width="3" height="16.4" fill="#089981"/><line x1="1076.50" y1="301.1" x2="1076.50" y2="314.9" stroke="#089981" stroke-width="1"/><rect x="1075.00" y="304.7" width="3" height="7.4" fill="#089981"/><line x1="1080.50" y1="303.9" x2="1080.50" y2="325.0" stroke="#f23645" stroke-width="1"/><rect x="1079.00" y="304.7" width="3" height="10.3" fill="#f23645"/><line x1="1085.50" y1="308.1" x2="1085.50" y2="328.8" stroke="#089981" stroke-width="1"/><rect x="1084.00" y="314.7" width="3" height="0.9" fill="#089981"/><line x1="1090.50" y1="289.9" x2="1090.50" y2="316.0" stroke="#089981" stroke-width="1"/><rect x="1089.00" y="292.0" width="3" height="22.7" fill="#089981"/><line x1="1095.50" y1="289.9" x2="1095.50" y2="304.9" stroke="#f23645" stroke-width="1"/><rect x="1094.00" y="292.0" width="3" height="4.0" fill="#f23645"/><line x1="1099.50" y1="274.1" x2="1099.50" y2="296.8" stroke="#089981" stroke-width="1"/><rect x="1098.00" y="293.0" width="3" height="3.1" fill="#089981"/><line x1="1104.50" y1="245.0" x2="1104.50" y2="299.8" stroke="#089981" stroke-width="1"/><rect x="1103.00" y="250.2" width="3" height="42.7" fill="#089981"/><line x1="1108.50" y1="202.1" x2="1108.50" y2="251.3" stroke="#089981" stroke-width="1"/><rect x="1107.00" y="215.3" width="3" height="34.9" fill="#089981"/><line x1="1113.50" y1="179.1" x2="1113.50" y2="216.9" stroke="#089981" stroke-width="1"/><rect x="1112.00" y="185.3" width="3" height="30.0" fill="#089981"/><line x1="1117.50" y1="182.1" x2="1117.50" y2="211.1" stroke="#f23645" stroke-width="1"/><rect x="1116.00" y="185.3" width="3" height="2.9" fill="#f23645"/><line x1="1122.50" y1="161.9" x2="1122.50" y2="215.1" stroke="#089981" stroke-width="1"/><rect x="1121.00" y="173.8" width="3" height="14.4" fill="#089981"/><line x1="1126.50" y1="158.1" x2="1126.50" y2="199.0" stroke="#089981" stroke-width="1"/><rect x="1125.00" y="161.7" width="3" height="12.2" fill="#089981"/><line x1="1131.50" y1="147.1" x2="1131.50" y2="205.9" stroke="#f23645" stroke-width="1"/><rect x="1130.00" y="161.7" width="3" height="34.3" fill="#f23645"/><line x1="1135.50" y1="178.0" x2="1135.50" y2="204.9" stroke="#f23645" stroke-width="1"/><rect x="1134.00" y="196.0" width="3" height="5.7" fill="#f23645"/><line x1="1140.50" y1="181.0" x2="1140.50" y2="208.9" stroke="#089981" stroke-width="1"/><rect x="1139.00" y="184.5" width="3" height="17.1" fill="#089981"/><line x1="1145.50" y1="167.1" x2="1145.50" y2="210.0" stroke="#f23645" stroke-width="1"/><rect x="1144.00" y="184.5" width="3" height="13.6" fill="#f23645"/><line x1="1150.50" y1="154.2" x2="1150.50" y2="218.0" stroke="#089981" stroke-width="1"/><rect x="1149.00" y="173.1" width="3" height="25.1" fill="#089981"/><line x1="1154.50" y1="140.9" x2="1154.50" y2="179.1" stroke="#089981" stroke-width="1"/><rect x="1153.00" y="168.3" width="3" height="4.8" fill="#089981"/><line x1="1159.50" y1="154.2" x2="1159.50" y2="192.0" stroke="#f23645" stroke-width="1"/><rect x="1158.00" y="168.3" width="3" height="18.1" fill="#f23645"/><line x1="1163.50" y1="168.1" x2="1163.50" y2="210.0" stroke="#f23645" stroke-width="1"/><rect x="1162.00" y="186.4" width="3" height="4.6" fill="#f23645"/><line x1="1168.50" y1="182.1" x2="1168.50" y2="199.0" stroke="#f23645" stroke-width="1"/><rect x="1167.00" y="191.0" width="3" height="1.2" fill="#f23645"/><line x1="1172.50" y1="179.1" x2="1172.50" y2="202.2" stroke="#089981" stroke-width="1"/><rect x="1171.00" y="191.7" width="3" height="0.9" fill="#089981"/><line x1="1177.50" y1="190.0" x2="1177.50" y2="256.9" stroke="#f23645" stroke-width="1"/><rect x="1176.00" y="191.7" width="3" height="7.3" fill="#f23645"/><line x1="1181.50" y1="198.2" x2="1181.50" y2="251.1" stroke="#f23645" stroke-width="1"/><rect x="1180.00" y="199.0" width="3" height="50.0" fill="#f23645"/><line x1="1186.50" y1="232.2" x2="1186.50" y2="263.9" stroke="#089981" stroke-width="1"/><rect x="1185.00" y="242.1" width="3" height="6.9" fill="#089981"/><line x1="1190.50" y1="224.2" x2="1190.50" y2="247.0" stroke="#089981" stroke-width="1"/><rect x="1189.00" y="229.2" width="3" height="12.9" fill="#089981"/><line x1="1195.50" y1="219.3" x2="1195.50" y2="245.0" stroke="#f23645" stroke-width="1"/><rect x="1194.00" y="229.2" width="3" height="13.6" fill="#f23645"/><line x1="1200.50" y1="220.1" x2="1200.50" y2="262.0" stroke="#f23645" stroke-width="1"/><rect x="1199.00" y="242.8" width="3" height="14.8" fill="#f23645"/><line x1="1205.50" y1="229.3" x2="1205.50" y2="270.8" stroke="#089981" stroke-width="1"/><rect x="1204.00" y="237.7" width="3" height="19.9" fill="#089981"/><line x1="1209.50" y1="227.1" x2="1209.50" y2="240.0" stroke="#089981" stroke-width="1"/><rect x="1208.00" y="232.5" width="3" height="5.2" fill="#089981"/><line x1="1214.50" y1="193.1" x2="1214.50" y2="233.2" stroke="#089981" stroke-width="1"/><rect x="1213.00" y="200.9" width="3" height="31.6" fill="#089981"/><line x1="1218.50" y1="185.0" x2="1218.50" y2="204.0" stroke="#089981" stroke-width="1"/><rect x="1217.00" y="199.0" width="3" height="2.0" fill="#089981"/><line x1="1223.50" y1="159.2" x2="1223.50" y2="201.9" stroke="#089981" stroke-width="1"/><rect x="1222.00" y="162.8" width="3" height="36.2" fill="#089981"/><line x1="1227.50" y1="153.1" x2="1227.50" y2="175.0" stroke="#089981" stroke-width="1"/><rect x="1226.00" y="154.1" width="3" height="8.7" fill="#089981"/><line x1="1232.50" y1="132.8" x2="1232.50" y2="170.0" stroke="#089981" stroke-width="1"/><rect x="1231.00" y="144.7" width="3" height="9.4" fill="#089981"/><line x1="1236.50" y1="138.0" x2="1236.50" y2="166.0" stroke="#f23645" stroke-width="1"/><rect x="1235.00" y="144.7" width="3" height="12.2" fill="#f23645"/><line x1="1241.50" y1="152.0" x2="1241.50" y2="176.1" stroke="#089981" stroke-width="1"/><rect x="1240.00" y="156.8" width="3" height="0.9" fill="#089981"/><line x1="1245.50" y1="138.0" x2="1245.50" y2="167.8" stroke="#f23645" stroke-width="1"/><rect x="1244.00" y="156.8" width="3" height="0.9" fill="#f23645"/><line x1="1250.50" y1="143.7" x2="1250.50" y2="183.9" stroke="#f23645" stroke-width="1"/><rect x="1249.00" y="157.3" width="3" height="17.0" fill="#f23645"/><line x1="1255.50" y1="146.0" x2="1255.50" y2="179.1" stroke="#089981" stroke-width="1"/><rect x="1254.00" y="147.1" width="3" height="27.1" fill="#089981"/><line x1="1260.50" y1="139.0" x2="1260.50" y2="158.9" stroke="#089981" stroke-width="1"/><rect x="1259.00" y="144.0" width="3" height="3.1" fill="#089981"/><line x1="1264.50" y1="105.9" x2="1264.50" y2="149.7" stroke="#089981" stroke-width="1"/><rect x="1263.00" y="107.5" width="3" height="36.5" fill="#089981"/><line x1="1269.50" y1="92.0" x2="1269.50" y2="118.9" stroke="#f23645" stroke-width="1"/><rect x="1268.00" y="107.5" width="3" height="6.6" fill="#f23645"/><line x1="1273.50" y1="103.1" x2="1273.50" y2="123.0" stroke="#089981" stroke-width="1"/><rect x="1272.00" y="106.4" width="3" height="7.7" fill="#089981"/><line x1="1278.50" y1="104.0" x2="1278.50" y2="133.9" stroke="#f23645" stroke-width="1"/><rect x="1277.00" y="106.4" width="3" height="19.2" fill="#f23645"/><line x1="1282.50" y1="105.7" x2="1282.50" y2="130.9" stroke="#089981" stroke-width="1"/><rect x="1281.00" y="106.8" width="3" height="18.8" fill="#089981"/><line x1="1287.50" y1="87.1" x2="1287.50" y2="116.0" stroke="#f23645" stroke-width="1"/><rect x="1286.00" y="106.8" width="3" height="7.0" fill="#f23645"/><line x1="1291.50" y1="112.7" x2="1291.50" y2="138.7" stroke="#f23645" stroke-width="1"/><rect x="1290.00" y="113.8" width="3" height="14.4" fill="#f23645"/><line x1="1296.50" y1="127.0" x2="1296.50" y2="149.7" stroke="#f23645" stroke-width="1"/><rect x="1295.00" y="128.2" width="3" height="19.3" fill="#f23645"/><line x1="1300.50" y1="128.0" x2="1300.50" y2="150.8" stroke="#089981" stroke-width="1"/><rect x="1299.00" y="137.0" width="3" height="10.5" fill="#089981"/><line x1="1305.50" y1="116.0" x2="1305.50" y2="137.6" stroke="#089981" stroke-width="1"/><rect x="1304.00" y="121.5" width="3" height="15.5" fill="#089981"/><line x1="1310.50" y1="110.9" x2="1310.50" y2="123.8" stroke="#f23645" stroke-width="1"/><rect x="1309.00" y="121.5" width="3" height="0.9" fill="#f23645"/><line x1="1315.50" y1="120.7" x2="1315.50" y2="145.7" stroke="#f23645" stroke-width="1"/><rect x="1314.00" y="121.7" width="3" height="11.6" fill="#f23645"/><line x1="1319.50" y1="82.5" x2="1319.50" y2="134.8" stroke="#089981" stroke-width="1"/><rect x="1318.00" y="91.3" width="3" height="42.0" fill="#089981"/><line x1="1324.50" y1="81.3" x2="1324.50" y2="171.8" stroke="#f23645" stroke-width="1"/><rect x="1323.00" y="91.3" width="3" height="31.3" fill="#f23645"/><line x1="1328.50" y1="118.9" x2="1328.50" y2="163.6" stroke="#f23645" stroke-width="1"/><rect x="1327.00" y="122.6" width="3" height="23.6" fill="#f23645"/><line x1="1333.50" y1="120.0" x2="1333.50" y2="152.6" stroke="#089981" stroke-width="1"/><rect x="1332.00" y="124.5" width="3" height="21.7" fill="#089981"/><line x1="1337.50" y1="117.0" x2="1337.50" y2="153.7" stroke="#f23645" stroke-width="1"/><rect x="1336.00" y="124.5" width="3" height="14.7" fill="#f23645"/><line x1="1342.50" y1="138.0" x2="1342.50" y2="180.9" stroke="#f23645" stroke-width="1"/><rect x="1341.00" y="139.2" width="3" height="21.4" fill="#f23645"/><line x1="1346.50" y1="149.7" x2="1346.50" y2="203.3" stroke="#f23645" stroke-width="1"/><rect x="1345.00" y="160.6" width="3" height="38.7" fill="#f23645"/><line x1="1351.50" y1="192.4" x2="1351.50" y2="249.1" stroke="#f23645" stroke-width="1"/><rect x="1350.00" y="199.3" width="3" height="27.8" fill="#f23645"/><line x1="1355.50" y1="203.3" x2="1355.50" y2="232.0" stroke="#089981" stroke-width="1"/><rect x="1354.00" y="213.5" width="3" height="13.6" fill="#089981"/><line x1="1360.50" y1="199.4" x2="1360.50" y2="237.1" stroke="#089981" stroke-width="1"/><rect x="1359.00" y="213.3" width="3" height="0.9" fill="#089981"/><line x1="1365.50" y1="197.5" x2="1365.50" y2="223.1" stroke="#f23645" stroke-width="1"/><rect x="1364.00" y="213.3" width="3" height="9.1" fill="#f23645"/><line x1="1370.50" y1="213.5" x2="1370.50" y2="235.1" stroke="#089981" stroke-width="1"/><rect x="1369.00" y="219.4" width="3" height="3.0" fill="#089981"/><line x1="1374.50" y1="212.4" x2="1374.50" y2="227.1" stroke="#f23645" stroke-width="1"/><rect x="1373.00" y="219.4" width="3" height="3.8" fill="#f23645"/><line x1="1379.50" y1="208.3" x2="1379.50" y2="226.0" stroke="#089981" stroke-width="1"/><rect x="1378.00" y="209.2" width="3" height="13.9" fill="#089981"/><line x1="1383.50" y1="197.5" x2="1383.50" y2="217.2" stroke="#f23645" stroke-width="1"/><rect x="1382.00" y="209.2" width="3" height="3.2" fill="#f23645"/><line x1="1388.50" y1="185.4" x2="1388.50" y2="214.0" stroke="#089981" stroke-width="1"/><rect x="1387.00" y="201.2" width="3" height="11.2" fill="#089981"/><line x1="1392.50" y1="201.1" x2="1392.50" y2="229.0" stroke="#f23645" stroke-width="1"/><rect x="1391.00" y="201.2" width="3" height="26.9" fill="#f23645"/><line x1="1397.50" y1="212.4" x2="1397.50" y2="267.1" stroke="#f23645" stroke-width="1"/><rect x="1396.00" y="228.1" width="3" height="34.9" fill="#f23645"/><line x1="1401.50" y1="254.3" x2="1401.50" y2="324.8" stroke="#f23645" stroke-width="1"/><rect x="1400.00" y="263.0" width="3" height="24.9" fill="#f23645"/><line x1="1406.50" y1="283.1" x2="1406.50" y2="305.8" stroke="#f23645" stroke-width="1"/><rect x="1405.00" y="287.9" width="3" height="4.8" fill="#f23645"/><line x1="1410.50" y1="287.2" x2="1410.50" y2="303.6" stroke="#f23645" stroke-width="1"/><rect x="1409.00" y="292.7" width="3" height="5.1" fill="#f23645"/><line x1="1415.50" y1="288.3" x2="1415.50" y2="315.9" stroke="#f23645" stroke-width="1"/><rect x="1414.00" y="297.9" width="3" height="5.7" fill="#f23645"/><line x1="1420.50" y1="273.3" x2="1420.50" y2="304.5" stroke="#089981" stroke-width="1"/><rect x="1419.00" y="303.2" width="3" height="0.9" fill="#089981"/><line x1="1425.50" y1="274.4" x2="1425.50" y2="304.0" stroke="#089981" stroke-width="1"/><rect x="1424.00" y="277.8" width="3" height="25.4" fill="#089981"/><line x1="1429.50" y1="266.2" x2="1429.50" y2="298.1" stroke="#f23645" stroke-width="1"/><rect x="1428.00" y="277.8" width="3" height="19.2" fill="#f23645"/><line x1="1434.50" y1="280.1" x2="1434.50" y2="305.8" stroke="#f23645" stroke-width="1"/><rect x="1433.00" y="297.0" width="3" height="6.6" fill="#f23645"/><line x1="1438.50" y1="290.1" x2="1438.50" y2="303.9" stroke="#089981" stroke-width="1"/><rect x="1437.00" y="292.0" width="3" height="11.6" fill="#089981"/><line x1="1443.50" y1="274.4" x2="1443.50" y2="296.8" stroke="#089981" stroke-width="1"/><rect x="1442.00" y="284.4" width="3" height="7.7" fill="#089981"/></g>
<line x1="11" y1="284.5" x2="1552" y2="284.5" stroke="#0aa58b" stroke-width="1" stroke-dasharray="1.2 1.8"/>
<line x1="11" y1="596.5" x2="1552" y2="596.5" stroke="#1e1e20" stroke-width="1"/>
<line x1="11" y1="632.5" x2="1552" y2="632.5" stroke="#1e1e20" stroke-width="1"/>
<line x1="11" y1="668.5" x2="1552" y2="668.5" stroke="#1e1e20" stroke-width="1"/>
<rect x="11" y="614.5" width="1541" height="72.0" fill="#7e57c2" fill-opacity="0.1"/>
<ellipse cx="1415.5" cy="688.1" rx="23.4" ry="13.5" fill="#0e3a44" fill-opacity="0.88" stroke="#2566ea" stroke-width="1.3"/>
<line x1="11" y1="614.5" x2="1552" y2="614.5" stroke="#9698a2" stroke-width="1.2" stroke-dasharray="5.15 5.91" stroke-dashoffset="-2"/>
<line x1="11" y1="650.5" x2="1552" y2="650.5" stroke="#6a6b75" stroke-width="1" stroke-dasharray="5.15 5.91" stroke-dashoffset="-2"/>
<line x1="11" y1="686.5" x2="1552" y2="686.5" stroke="#9698a2" stroke-width="1.2" stroke-dasharray="5.15 5.91" stroke-dashoffset="-2"/>
<polygon points="8.4,614.5 8.4,660.6 13.4,657.8 17.6,651.1 22.6,638.8 26.8,640.7 31.8,632.1 35.9,643.6 40.9,636.9 45.1,634.3 50.1,639.4 54.3,639.9 59.3,642.3 63.4,643.0 68.4,640.2 72.6,641.6 77.6,632.9 81.8,621.6 86.8,616.6 90.9,614.9 95.9,619.5 100.1,618.9 105.1,642.9 109.3,641.9 114.3,635.1 118.4,637.5 123.4,639.1 127.6,630.7 132.6,629.3 136.8,614.9 141.8,609.6 145.9,599.9 150.9,597.6 155.1,588.8 160.1,592.4 164.3,588.8 169.3,591.5 173.4,581.5 178.4,577.6 182.6,572.0 187.6,569.5 191.8,585.6 196.8,606.2 200.9,604.7 205.9,596.2 210.1,586.8 215.1,581.4 219.3,618.6 224.3,612.4 228.4,605.2 233.4,609.2 237.6,613.1 242.6,610.6 246.8,608.8 251.8,618.8 255.9,634.8 260.9,625.1 265.1,623.2 270.1,645.2 274.3,661.2 279.3,659.7 283.4,659.4 288.4,654.2 292.6,659.1 297.6,660.5 301.8,659.3 306.8,661.0 310.9,665.0 315.9,657.3 320.1,648.7 325.1,641.8 329.3,636.6 334.3,633.1 338.4,634.2 343.4,629.4 347.6,642.7 352.6,640.5 356.8,649.3 361.8,640.0 365.9,630.0 370.9,621.2 375.1,622.7 380.1,622.1 384.3,619.5 389.3,616.6 393.4,634.0 398.4,637.1 402.6,653.0 407.6,651.8 411.8,658.0 416.8,649.8 420.9,656.3 425.9,665.3 430.1,662.7 435.1,673.0 439.3,669.3 444.3,659.6 448.4,660.2 453.4,666.5 457.6,667.5 462.6,665.8 466.8,666.9 471.8,657.8 475.9,645.3 480.9,646.3 485.1,655.9 490.1,660.9 494.3,661.4 499.3,663.5 503.4,672.4 508.4,677.2 512.6,679.0 517.6,680.4 521.8,678.9 526.8,684.9 530.9,693.9 535.9,692.1 540.1,694.6 545.1,688.4 549.3,688.5 554.3,681.1 558.4,678.1 563.4,678.4 567.6,673.4 572.6,680.2 576.8,684.6 581.8,682.4 585.9,673.8 590.9,679.9 595.1,681.4 600.1,680.1 604.3,678.0 609.3,678.6 613.4,676.7 618.4,670.4 622.6,668.6 627.6,684.0 631.8,684.1 636.8,683.2 640.9,678.4 645.9,678.6 650.1,679.9 655.1,679.1 659.3,680.1 664.3,675.6 668.4,649.3 673.4,639.8 677.6,634.9 682.6,640.1 686.8,647.1 691.8,635.0 695.9,639.4 700.9,646.1 705.1,648.6 710.1,623.5 714.3,623.7 719.3,623.0 723.4,622.5 728.4,615.6 732.6,633.1 737.6,627.0 741.8,631.8 746.8,640.4 750.9,641.3 755.9,635.4 760.1,641.1 765.1,647.8 769.3,645.7 774.3,627.8 778.4,627.2 783.4,630.1 787.6,629.9 792.6,631.0 796.8,636.8 801.8,638.6 805.9,637.2 810.9,657.7 815.1,658.3 820.1,659.0 824.3,659.9 829.3,654.4 833.4,656.4 838.4,643.4 842.6,643.9 847.6,650.2 851.8,631.9 856.8,613.2 860.9,611.6 865.9,605.7 870.1,604.9 875.1,604.6 879.3,598.0 884.3,590.6 888.4,608.3 893.4,604.6 897.6,609.5 902.6,605.4 906.8,619.7 911.8,620.6 915.9,619.2 920.9,617.4 925.1,602.7 930.1,596.1 934.3,598.6 939.3,585.4 943.4,581.3 948.4,584.1 952.6,589.7 957.6,586.3 961.8,594.9 966.8,610.1 970.9,612.9 975.9,620.0 980.1,618.3 985.1,628.0 989.3,618.6 994.3,614.8 998.4,617.7 1003.4,614.3 1007.6,625.8 1012.6,637.6 1016.8,639.0 1021.8,658.3 1025.9,645.8 1030.9,631.3 1035.1,631.2 1040.1,654.5 1044.3,653.3 1049.3,653.8 1053.4,641.7 1058.4,655.9 1062.6,660.3 1067.6,651.4 1071.8,643.2 1076.8,639.7 1080.9,645.7 1085.9,645.6 1090.1,634.4 1095.1,637.0 1099.3,635.5 1104.3,618.3 1108.4,608.6 1113.4,602.1 1117.6,604.1 1122.6,601.1 1126.8,598.7 1131.8,620.2 1135.9,623.3 1140.9,618.4 1145.1,626.1 1150.1,618.8 1154.3,617.5 1159.3,627.8 1163.4,630.3 1168.4,631.0 1172.6,630.8 1177.6,635.4 1181.8,660.4 1186.8,657.0 1190.9,650.8 1195.9,656.9 1200.1,663.1 1205.1,653.2 1209.3,650.8 1214.3,637.4 1218.4,636.7 1223.4,624.3 1227.6,621.7 1232.6,619.0 1236.8,626.1 1241.8,626.1 1245.9,626.4 1250.9,637.0 1255.1,626.5 1260.1,625.4 1264.3,614.0 1269.3,618.2 1273.4,615.9 1278.4,627.9 1282.6,621.7 1287.6,625.9 1291.8,634.3 1296.8,644.5 1300.9,640.1 1305.9,633.9 1310.1,634.0 1315.1,640.7 1319.3,624.8 1324.3,640.7 1328.4,650.7 1333.4,642.6 1337.6,648.7 1342.6,656.8 1346.8,669.1 1351.8,676.4 1355.9,670.5 1360.9,670.4 1365.1,673.1 1370.1,671.6 1374.3,672.8 1379.3,665.5 1383.4,666.7 1388.4,660.6 1392.6,670.9 1397.6,681.6 1401.8,687.8 1406.8,688.9 1410.9,690.2 1415.9,691.6 1420.1,691.3 1425.1,674.9 1429.3,681.0 1434.3,683.0 1438.4,675.7 1443.4,671.1 1443.4,614.5" fill="url(#ob)" clip-path="url(#cob)" id="obfill"/>
<polyline points="8.4,660.6 13.4,657.8 17.6,651.1 22.6,638.8 26.8,640.7 31.8,632.1 35.9,643.6 40.9,636.9 45.1,634.3 50.1,639.4 54.3,639.9 59.3,642.3 63.4,643.0 68.4,640.2 72.6,641.6 77.6,632.9 81.8,621.6 86.8,616.6 90.9,614.9 95.9,619.5 100.1,618.9 105.1,642.9 109.3,641.9 114.3,635.1 118.4,637.5 123.4,639.1 127.6,630.7 132.6,629.3 136.8,614.9 141.8,609.6 145.9,599.9 150.9,597.6 155.1,588.8 160.1,592.4 164.3,588.8 169.3,591.5 173.4,581.5 178.4,577.6 182.6,572.0 187.6,569.5 191.8,585.6 196.8,606.2 200.9,604.7 205.9,596.2 210.1,586.8 215.1,581.4 219.3,618.6 224.3,612.4 228.4,605.2 233.4,609.2 237.6,613.1 242.6,610.6 246.8,608.8 251.8,618.8 255.9,634.8 260.9,625.1 265.1,623.2 270.1,645.2 274.3,661.2 279.3,659.7 283.4,659.4 288.4,654.2 292.6,659.1 297.6,660.5 301.8,659.3 306.8,661.0 310.9,665.0 315.9,657.3 320.1,648.7 325.1,641.8 329.3,636.6 334.3,633.1 338.4,634.2 343.4,629.4 347.6,642.7 352.6,640.5 356.8,649.3 361.8,640.0 365.9,630.0 370.9,621.2 375.1,622.7 380.1,622.1 384.3,619.5 389.3,616.6 393.4,634.0 398.4,637.1 402.6,653.0 407.6,651.8 411.8,658.0 416.8,649.8 420.9,656.3 425.9,665.3 430.1,662.7 435.1,673.0 439.3,669.3 444.3,659.6 448.4,660.2 453.4,666.5 457.6,667.5 462.6,665.8 466.8,666.9 471.8,657.8 475.9,645.3 480.9,646.3 485.1,655.9 490.1,660.9 494.3,661.4 499.3,663.5 503.4,672.4 508.4,677.2 512.6,679.0 517.6,680.4 521.8,678.9 526.8,684.9 530.9,693.9 535.9,692.1 540.1,694.6 545.1,688.4 549.3,688.5 554.3,681.1 558.4,678.1 563.4,678.4 567.6,673.4 572.6,680.2 576.8,684.6 581.8,682.4 585.9,673.8 590.9,679.9 595.1,681.4 600.1,680.1 604.3,678.0 609.3,678.6 613.4,676.7 618.4,670.4 622.6,668.6 627.6,684.0 631.8,684.1 636.8,683.2 640.9,678.4 645.9,678.6 650.1,679.9 655.1,679.1 659.3,680.1 664.3,675.6 668.4,649.3 673.4,639.8 677.6,634.9 682.6,640.1 686.8,647.1 691.8,635.0 695.9,639.4 700.9,646.1 705.1,648.6 710.1,623.5 714.3,623.7 719.3,623.0 723.4,622.5 728.4,615.6 732.6,633.1 737.6,627.0 741.8,631.8 746.8,640.4 750.9,641.3 755.9,635.4 760.1,641.1 765.1,647.8 769.3,645.7 774.3,627.8 778.4,627.2 783.4,630.1 787.6,629.9 792.6,631.0 796.8,636.8 801.8,638.6 805.9,637.2 810.9,657.7 815.1,658.3 820.1,659.0 824.3,659.9 829.3,654.4 833.4,656.4 838.4,643.4 842.6,643.9 847.6,650.2 851.8,631.9 856.8,613.2 860.9,611.6 865.9,605.7 870.1,604.9 875.1,604.6 879.3,598.0 884.3,590.6 888.4,608.3 893.4,604.6 897.6,609.5 902.6,605.4 906.8,619.7 911.8,620.6 915.9,619.2 920.9,617.4 925.1,602.7 930.1,596.1 934.3,598.6 939.3,585.4 943.4,581.3 948.4,584.1 952.6,589.7 957.6,586.3 961.8,594.9 966.8,610.1 970.9,612.9 975.9,620.0 980.1,618.3 985.1,628.0 989.3,618.6 994.3,614.8 998.4,617.7 1003.4,614.3 1007.6,625.8 1012.6,637.6 1016.8,639.0 1021.8,658.3 1025.9,645.8 1030.9,631.3 1035.1,631.2 1040.1,654.5 1044.3,653.3 1049.3,653.8 1053.4,641.7 1058.4,655.9 1062.6,660.3 1067.6,651.4 1071.8,643.2 1076.8,639.7 1080.9,645.7 1085.9,645.6 1090.1,634.4 1095.1,637.0 1099.3,635.5 1104.3,618.3 1108.4,608.6 1113.4,602.1 1117.6,604.1 1122.6,601.1 1126.8,598.7 1131.8,620.2 1135.9,623.3 1140.9,618.4 1145.1,626.1 1150.1,618.8 1154.3,617.5 1159.3,627.8 1163.4,630.3 1168.4,631.0 1172.6,630.8 1177.6,635.4 1181.8,660.4 1186.8,657.0 1190.9,650.8 1195.9,656.9 1200.1,663.1 1205.1,653.2 1209.3,650.8 1214.3,637.4 1218.4,636.7 1223.4,624.3 1227.6,621.7 1232.6,619.0 1236.8,626.1 1241.8,626.1 1245.9,626.4 1250.9,637.0 1255.1,626.5 1260.1,625.4 1264.3,614.0 1269.3,618.2 1273.4,615.9 1278.4,627.9 1282.6,621.7 1287.6,625.9 1291.8,634.3 1296.8,644.5 1300.9,640.1 1305.9,633.9 1310.1,634.0 1315.1,640.7 1319.3,624.8 1324.3,640.7 1328.4,650.7 1333.4,642.6 1337.6,648.7 1342.6,656.8 1346.8,669.1 1351.8,676.4 1355.9,670.5 1360.9,670.4 1365.1,673.1 1370.1,671.6 1374.3,672.8 1379.3,665.5 1383.4,666.7 1388.4,660.6 1392.6,670.9 1397.6,681.6 1401.8,687.8 1406.8,688.9 1410.9,690.2 1415.9,691.6 1420.1,691.3 1425.1,674.9 1429.3,681.0 1434.3,683.0 1438.4,675.7 1443.4,671.1" fill="none" stroke="#7e57c2" stroke-width="1.05" stroke-linejoin="round" clip-path="url(#cr)"/>
<polyline points="8.4,651.0 13.4,651.7 17.6,652.3 22.6,652.0 26.8,652.4 31.8,652.7 35.9,653.7 40.9,654.1 45.1,653.0 50.1,651.7 54.3,648.9 59.3,646.6 63.4,644.5 68.4,642.9 72.6,641.6 77.6,639.8 81.8,637.7 86.8,636.1 90.9,634.3 95.9,633.4 100.1,631.6 105.1,632.0 109.3,632.6 114.3,632.2 118.4,632.1 123.4,631.8 127.6,631.0 132.6,630.2 136.8,628.3 141.8,626.6 145.9,625.0 150.9,623.7 155.1,621.8 160.1,619.9 164.3,617.7 169.3,614.1 173.4,609.8 178.4,605.7 182.6,601.0 187.6,596.0 191.8,592.8 196.8,591.1 200.9,590.4 205.9,589.5 210.1,588.5 215.1,587.4 219.3,589.5 224.3,590.9 228.4,592.1 233.4,593.3 237.6,595.6 242.6,598.0 246.8,600.6 251.8,604.1 255.9,607.6 260.9,609.0 265.1,610.3 270.1,613.8 274.3,619.1 279.3,624.7 283.4,627.6 288.4,630.6 292.6,634.5 297.6,638.1 301.8,641.4 306.8,645.0 310.9,649.0 315.9,651.8 320.1,652.8 325.1,654.0 329.3,654.9 334.3,654.1 338.4,652.1 343.4,650.0 347.6,648.8 352.6,647.8 356.8,647.1 361.8,645.6 365.9,643.5 370.9,640.7 375.1,637.7 380.1,635.2 384.3,633.1 389.3,631.3 393.4,631.1 398.4,631.4 402.6,632.7 407.6,634.3 411.8,635.4 416.8,636.1 420.9,636.6 425.9,638.4 430.1,640.7 435.1,644.4 439.3,647.8 444.3,650.4 448.4,653.3 453.4,656.9 457.6,659.3 462.6,661.4 466.8,662.3 471.8,662.8 475.9,661.9 480.9,661.6 485.1,661.6 490.1,661.3 494.3,661.2 499.3,660.5 503.4,660.7 508.4,662.0 512.6,663.3 517.6,664.3 521.8,665.1 526.8,666.5 530.9,668.4 535.9,670.9 540.1,674.4 545.1,677.4 549.3,679.7 554.3,681.2 558.4,682.4 563.4,683.4 567.6,683.5 572.6,683.7 576.8,684.1 581.8,684.2 585.9,683.9 590.9,683.5 595.1,682.6 600.1,681.8 604.3,680.6 609.3,679.9 613.4,679.1 618.4,678.3 622.6,677.6 627.6,678.0 631.8,678.8 636.8,679.0 640.9,678.6 645.9,678.3 650.1,678.7 655.1,678.7 659.3,678.6 664.3,678.2 668.4,676.2 673.4,673.4 677.6,670.4 682.6,668.3 686.8,666.7 691.8,663.2 695.9,660.0 700.9,657.4 705.1,655.3 710.1,651.3 714.3,647.3 719.3,643.3 723.4,639.2 728.4,634.9 732.6,633.7 737.6,632.8 741.8,632.6 746.8,632.6 750.9,632.2 755.9,632.2 760.1,632.4 765.1,632.5 769.3,632.3 774.3,632.6 778.4,632.8 783.4,633.3 787.6,633.9 792.6,635.0 796.8,635.2 801.8,636.1 805.9,636.4 810.9,637.7 815.1,638.9 820.1,640.6 824.3,641.9 829.3,642.4 833.4,643.2 838.4,644.3 842.6,645.5 847.6,646.9 851.8,647.0 856.8,645.8 860.9,644.0 865.9,641.6 870.1,639.3 875.1,635.5 879.3,631.2 884.3,626.3 888.4,622.7 893.4,619.1 897.6,615.7 902.6,613.0 906.8,611.3 911.8,609.2 915.9,608.3 920.9,608.6 925.1,607.9 930.1,607.3 934.3,606.8 939.3,605.4 943.4,604.2 948.4,603.8 952.6,602.4 957.6,601.1 961.8,600.1 966.8,600.4 970.9,600.0 975.9,599.9 980.1,599.8 985.1,600.6 989.3,601.7 994.3,603.1 998.4,604.4 1003.4,606.5 1007.6,609.7 1012.6,613.5 1016.8,617.0 1021.8,622.2 1025.9,625.8 1030.9,627.3 1035.1,628.6 1040.1,631.1 1044.3,633.6 1049.3,635.4 1053.4,637.1 1058.4,640.0 1062.6,643.1 1067.6,645.7 1071.8,647.0 1076.8,647.1 1080.9,647.6 1085.9,646.7 1090.1,645.9 1095.1,646.3 1099.3,646.6 1104.3,644.0 1108.4,640.8 1113.4,637.1 1117.6,634.4 1122.6,630.5 1126.8,626.1 1131.8,623.9 1135.9,622.4 1140.9,620.9 1145.1,619.5 1150.1,617.6 1154.3,616.4 1159.3,615.7 1163.4,615.4 1168.4,616.3 1172.6,617.9 1177.6,620.3 1181.8,624.3 1186.8,628.3 1190.9,632.0 1195.9,634.6 1200.1,637.5 1205.1,639.9 1209.3,641.7 1214.3,643.0 1218.4,644.4 1223.4,644.2 1227.6,643.5 1232.6,642.7 1236.8,642.4 1241.8,641.7 1245.9,639.3 1250.9,637.8 1255.1,636.1 1260.1,633.8 1264.3,630.3 1269.3,627.8 1273.4,625.3 1278.4,624.7 1282.6,623.6 1287.6,623.7 1291.8,624.6 1296.8,626.4 1300.9,627.4 1305.9,628.0 1310.1,628.5 1315.1,628.8 1319.3,628.7 1324.3,629.8 1328.4,632.4 1333.4,634.1 1337.6,636.5 1342.6,638.5 1346.8,641.9 1351.8,645.5 1355.9,648.1 1360.9,650.0 1365.1,652.3 1370.1,655.0 1374.3,657.8 1379.3,659.6 1383.4,662.6 1388.4,664.0 1392.6,665.4 1397.6,668.2 1401.8,671.0 1406.8,673.3 1410.9,674.8 1415.9,675.9 1420.1,677.4 1425.1,677.7 1429.3,678.2 1434.3,679.0 1438.4,679.3 1443.4,679.7" fill="none" stroke="#f2d53c" stroke-width="1.05" stroke-linejoin="round" clip-path="url(#cr)"/>
<line x1="11" y1="725.5" x2="1552" y2="725.5" stroke="#1e1e20" stroke-width="1"/>
<line x1="11" y1="832.5" x2="1552" y2="832.5" stroke="#1e1e20" stroke-width="1"/>
<line x1="11" y1="779.5" x2="1552" y2="779.5" stroke="#4a4a4a" stroke-width="1" stroke-dasharray="5 5.8"/>
<circle cx="1443.5" cy="781.4" r="17.4" fill="#41401e" stroke="#f2df30" stroke-width="1.3"/>
<line x1="1426" y1="779.5" x2="1461" y2="779.5" stroke="#6a6a5a" stroke-width="1" stroke-dasharray="5 5.8" stroke-dashoffset="0.2"/>
<g clip-path="url(#cd)"><rect x="12.00" y="779.4" width="3" height="1.3" fill="#ffcdd2"/><rect x="16.00" y="779.4" width="3" height="1.3" fill="#ffcdd2"/><rect x="21.00" y="779.2" width="3" height="1.3" fill="#26a69a"/><rect x="25.00" y="778.8" width="3" height="1.3" fill="#26a69a"/><rect x="30.00" y="778.2" width="3" height="1.3" fill="#26a69a"/><rect x="34.00" y="778.2" width="3" height="1.3" fill="#b2dfdb"/><rect x="39.00" y="778.1" width="3" height="1.3" fill="#26a69a"/><rect x="44.00" y="777.9" width="3" height="1.5" fill="#26a69a"/><rect x="49.00" y="778.0" width="3" height="1.4" fill="#b2dfdb"/><rect x="53.00" y="778.2" width="3" height="1.3" fill="#b2dfdb"/><rect x="58.00" y="778.4" width="3" height="1.3" fill="#b2dfdb"/><rect x="62.00" y="778.7" width="3" height="1.3" fill="#b2dfdb"/><rect x="67.00" y="778.8" width="3" height="1.3" fill="#b2dfdb"/><rect x="71.00" y="778.9" width="3" height="1.3" fill="#b2dfdb"/><rect x="76.00" y="778.8" width="3" height="1.3" fill="#26a69a"/><rect x="80.00" y="778.4" width="3" height="1.3" fill="#26a69a"/><rect x="85.00" y="778.0" width="3" height="1.4" fill="#26a69a"/><rect x="89.00" y="777.7" width="3" height="1.7" fill="#26a69a"/><rect x="94.00" y="777.8" width="3" height="1.6" fill="#b2dfdb"/><rect x="99.00" y="777.9" width="3" height="1.5" fill="#b2dfdb"/><rect x="104.00" y="778.6" width="3" height="1.3" fill="#b2dfdb"/><rect x="108.00" y="779.1" width="3" height="1.3" fill="#b2dfdb"/><rect x="113.00" y="779.2" width="3" height="1.3" fill="#b2dfdb"/><rect x="117.00" y="779.4" width="3" height="1.3" fill="#b2dfdb"/><rect x="122.00" y="779.4" width="3" height="1.3" fill="#ff5252"/><rect x="126.00" y="779.4" width="3" height="1.3" fill="#ffcdd2"/><rect x="131.00" y="779.4" width="3" height="1.3" fill="#26a69a"/><rect x="135.00" y="778.9" width="3" height="1.3" fill="#26a69a"/><rect x="140.00" y="778.3" width="3" height="1.3" fill="#26a69a"/><rect x="144.00" y="777.5" width="3" height="1.9" fill="#26a69a"/><rect x="149.00" y="777.0" width="3" height="2.4" fill="#26a69a"/><rect x="154.00" y="776.0" width="3" height="3.4" fill="#26a69a"/><rect x="159.00" y="775.7" width="3" height="3.7" fill="#26a69a"/><rect x="163.00" y="775.3" width="3" height="4.1" fill="#26a69a"/><rect x="168.00" y="775.4" width="3" height="4.0" fill="#b2dfdb"/><rect x="172.00" y="774.4" width="3" height="5.0" fill="#26a69a"/><rect x="177.00" y="773.1" width="3" height="6.3" fill="#26a69a"/><rect x="181.00" y="770.4" width="3" height="9.0" fill="#26a69a"/><rect x="186.00" y="767.6" width="3" height="11.8" fill="#26a69a"/><rect x="190.00" y="767.4" width="3" height="12.0" fill="#26a69a"/><rect x="195.00" y="769.3" width="3" height="10.1" fill="#b2dfdb"/><rect x="199.00" y="770.9" width="3" height="8.5" fill="#b2dfdb"/><rect x="204.00" y="770.7" width="3" height="8.7" fill="#26a69a"/><rect x="209.00" y="767.9" width="3" height="11.5" fill="#26a69a"/><rect x="214.00" y="764.0" width="3" height="15.4" fill="#26a69a"/><rect x="218.00" y="766.9" width="3" height="12.5" fill="#b2dfdb"/><rect x="223.00" y="767.7" width="3" height="11.7" fill="#b2dfdb"/><rect x="227.00" y="766.4" width="3" height="13.0" fill="#26a69a"/><rect x="232.00" y="767.2" width="3" height="12.2" fill="#b2dfdb"/><rect x="236.00" y="769.4" width="3" height="10.0" fill="#b2dfdb"/><rect x="241.00" y="770.8" width="3" height="8.6" fill="#b2dfdb"/><rect x="245.00" y="772.0" width="3" height="7.4" fill="#b2dfdb"/><rect x="250.00" y="775.0" width="3" height="4.4" fill="#b2dfdb"/><rect x="254.00" y="779.4" width="3" height="1.3" fill="#ff5252"/><rect x="259.00" y="779.4" width="3" height="1.6" fill="#ff5252"/><rect x="264.00" y="779.4" width="3" height="2.0" fill="#ff5252"/><rect x="269.00" y="779.4" width="3" height="6.7" fill="#ff5252"/><rect x="273.00" y="779.4" width="3" height="13.8" fill="#ff5252"/><rect x="278.00" y="779.4" width="3" height="17.6" fill="#ff5252"/><rect x="282.00" y="779.4" width="3" height="19.4" fill="#ff5252"/><rect x="287.00" y="779.4" width="3" height="18.7" fill="#ffcdd2"/><rect x="291.00" y="779.4" width="3" height="18.8" fill="#ff5252"/><rect x="296.00" y="779.4" width="3" height="18.5" fill="#ffcdd2"/><rect x="300.00" y="779.4" width="3" height="17.3" fill="#ffcdd2"/><rect x="305.00" y="779.4" width="3" height="16.2" fill="#ffcdd2"/><rect x="309.00" y="779.4" width="3" height="15.6" fill="#ffcdd2"/><rect x="314.00" y="779.4" width="3" height="13.3" fill="#ffcdd2"/><rect x="319.00" y="779.4" width="3" height="9.7" fill="#ffcdd2"/><rect x="324.00" y="779.4" width="3" height="5.7" fill="#ffcdd2"/><rect x="328.00" y="779.4" width="3" height="1.8" fill="#ffcdd2"/><rect x="333.00" y="777.9" width="3" height="1.5" fill="#26a69a"/><rect x="337.00" y="776.2" width="3" height="3.2" fill="#26a69a"/><rect x="342.00" y="774.3" width="3" height="5.1" fill="#26a69a"/><rect x="346.00" y="775.4" width="3" height="4.0" fill="#b2dfdb"/><rect x="351.00" y="775.9" width="3" height="3.5" fill="#b2dfdb"/><rect x="355.00" y="777.9" width="3" height="1.5" fill="#b2dfdb"/><rect x="360.00" y="777.6" width="3" height="1.8" fill="#26a69a"/><rect x="364.00" y="775.4" width="3" height="4.0" fill="#26a69a"/><rect x="369.00" y="772.0" width="3" height="7.4" fill="#26a69a"/><rect x="374.00" y="770.5" width="3" height="8.9" fill="#26a69a"/><rect x="379.00" y="770.1" width="3" height="9.3" fill="#26a69a"/><rect x="383.00" y="769.8" width="3" height="9.6" fill="#26a69a"/><rect x="388.00" y="769.5" width="3" height="9.9" fill="#26a69a"/><rect x="392.00" y="772.4" width="3" height="7.0" fill="#b2dfdb"/><rect x="397.00" y="775.2" width="3" height="4.2" fill="#b2dfdb"/><rect x="401.00" y="779.4" width="3" height="1.3" fill="#ff5252"/><rect x="406.00" y="779.4" width="3" height="3.8" fill="#ff5252"/><rect x="410.00" y="779.4" width="3" height="6.8" fill="#ff5252"/><rect x="415.00" y="779.4" width="3" height="7.2" fill="#ff5252"/><rect x="419.00" y="779.4" width="3" height="8.4" fill="#ff5252"/><rect x="424.00" y="779.4" width="3" height="10.8" fill="#ff5252"/><rect x="429.00" y="779.4" width="3" height="11.4" fill="#ff5252"/><rect x="434.00" y="779.4" width="3" height="13.6" fill="#ff5252"/><rect x="438.00" y="779.4" width="3" height="13.8" fill="#ff5252"/><rect x="443.00" y="779.4" width="3" height="11.7" fill="#ffcdd2"/><rect x="447.00" y="779.4" width="3" height="9.9" fill="#ffcdd2"/><rect x="452.00" y="779.4" width="3" height="9.6" fill="#ffcdd2"/><rect x="456.00" y="779.4" width="3" height="9.0" fill="#ffcdd2"/><rect x="461.00" y="779.4" width="3" height="7.9" fill="#ffcdd2"/><rect x="465.00" y="779.4" width="3" height="7.0" fill="#ffcdd2"/><rect x="470.00" y="779.4" width="3" height="4.7" fill="#ffcdd2"/><rect x="474.00" y="779.4" width="3" height="1.3" fill="#ffcdd2"/><rect x="479.00" y="778.2" width="3" height="1.3" fill="#26a69a"/><rect x="484.00" y="778.2" width="3" height="1.3" fill="#26a69a"/><rect x="489.00" y="779.0" width="3" height="1.3" fill="#b2dfdb"/><rect x="493.00" y="779.4" width="3" height="1.3" fill="#ff5252"/><rect x="498.00" y="779.4" width="3" height="1.3" fill="#ff5252"/><rect x="502.00" y="779.4" width="3" height="2.5" fill="#ff5252"/><rect x="507.00" y="779.4" width="3" height="4.3" fill="#ff5252"/><rect x="511.00" y="779.4" width="3" height="5.4" fill="#ff5252"/><rect x="516.00" y="779.4" width="3" height="6.0" fill="#ff5252"/><rect x="520.00" y="779.4" width="3" height="5.8" fill="#ffcdd2"/><rect x="525.00" y="779.4" width="3" height="6.3" fill="#ff5252"/><rect x="529.00" y="779.4" width="3" height="8.3" fill="#ff5252"/><rect x="534.00" y="779.4" width="3" height="8.7" fill="#ff5252"/><rect x="539.00" y="779.4" width="3" height="8.9" fill="#ff5252"/><rect x="544.00" y="779.4" width="3" height="7.8" fill="#ffcdd2"/><rect x="548.00" y="779.4" width="3" height="6.5" fill="#ffcdd2"/><rect x="553.00" y="779.4" width="3" height="4.5" fill="#ffcdd2"/><rect x="557.00" y="779.4" width="3" height="2.5" fill="#ffcdd2"/><rect x="562.00" y="779.4" width="3" height="1.3" fill="#ffcdd2"/><rect x="566.00" y="778.6" width="3" height="1.3" fill="#26a69a"/><rect x="571.00" y="778.2" width="3" height="1.3" fill="#26a69a"/><rect x="575.00" y="778.5" width="3" height="1.3" fill="#b2dfdb"/><rect x="580.00" y="778.3" width="3" height="1.3" fill="#26a69a"/><rect x="584.00" y="777.3" width="3" height="2.1" fill="#26a69a"/><rect x="589.00" y="777.4" width="3" height="2.0" fill="#b2dfdb"/><rect x="594.00" y="777.5" width="3" height="1.9" fill="#b2dfdb"/><rect x="599.00" y="777.4" width="3" height="2.0" fill="#26a69a"/><rect x="603.00" y="777.0" width="3" height="2.4" fill="#26a69a"/><rect x="608.00" y="776.7" width="3" height="2.7" fill="#26a69a"/><rect x="612.00" y="776.4" width="3" height="3.0" fill="#26a69a"/><rect x="617.00" y="775.7" width="3" height="3.7" fill="#26a69a"/><rect x="621.00" y="775.2" width="3" height="4.2" fill="#26a69a"/><rect x="626.00" y="776.4" width="3" height="3.0" fill="#b2dfdb"/><rect x="630.00" y="777.2" width="3" height="2.2" fill="#b2dfdb"/><rect x="635.00" y="777.6" width="3" height="1.8" fill="#b2dfdb"/><rect x="639.00" y="777.4" width="3" height="2.0" fill="#26a69a"/><rect x="644.00" y="777.3" width="3" height="2.1" fill="#26a69a"/><rect x="649.00" y="777.3" width="3" height="2.1" fill="#26a69a"/><rect x="654.00" y="777.2" width="3" height="2.2" fill="#26a69a"/><rect x="658.00" y="777.1" width="3" height="2.3" fill="#26a69a"/><rect x="663.00" y="776.9" width="3" height="2.5" fill="#26a69a"/><rect x="667.00" y="775.4" width="3" height="4.0" fill="#26a69a"/><rect x="672.00" y="773.9" width="3" height="5.5" fill="#26a69a"/><rect x="676.00" y="772.8" width="3" height="6.6" fill="#26a69a"/><rect x="681.00" y="772.6" width="3" height="6.8" fill="#26a69a"/><rect x="685.00" y="773.1" width="3" height="6.3" fill="#b2dfdb"/><rect x="690.00" y="772.8" width="3" height="6.6" fill="#26a69a"/><rect x="694.00" y="773.2" width="3" height="6.2" fill="#b2dfdb"/><rect x="699.00" y="774.0" width="3" height="5.4" fill="#b2dfdb"/><rect x="704.00" y="774.9" width="3" height="4.5" fill="#b2dfdb"/><rect x="709.00" y="773.7" width="3" height="5.7" fill="#26a69a"/><rect x="713.00" y="773.2" width="3" height="6.2" fill="#26a69a"/><rect x="718.00" y="773.1" width="3" height="6.3" fill="#26a69a"/><rect x="722.00" y="773.3" width="3" height="6.1" fill="#b2dfdb"/><rect x="727.00" y="773.1" width="3" height="6.3" fill="#26a69a"/><rect x="731.00" y="774.3" width="3" height="5.1" fill="#b2dfdb"/><rect x="736.00" y="774.8" width="3" height="4.6" fill="#b2dfdb"/><rect x="740.00" y="775.6" width="3" height="3.8" fill="#b2dfdb"/><rect x="745.00" y="777.0" width="3" height="2.4" fill="#b2dfdb"/><rect x="749.00" y="778.0" width="3" height="1.4" fill="#b2dfdb"/><rect x="754.00" y="778.4" width="3" height="1.3" fill="#b2dfdb"/><rect x="759.00" y="779.1" width="3" height="1.3" fill="#b2dfdb"/><rect x="764.00" y="779.4" width="3" height="1.3" fill="#ff5252"/><rect x="768.00" y="779.4" width="3" height="1.3" fill="#ff5252"/><rect x="773.00" y="779.4" width="3" height="1.3" fill="#26a69a"/><rect x="777.00" y="778.7" width="3" height="1.3" fill="#26a69a"/><rect x="782.00" y="778.6" width="3" height="1.3" fill="#26a69a"/><rect x="786.00" y="778.6" width="3" height="1.3" fill="#26a69a"/><rect x="791.00" y="778.7" width="3" height="1.3" fill="#b2dfdb"/><rect x="795.00" y="779.2" width="3" height="1.3" fill="#b2dfdb"/><rect x="800.00" y="779.4" width="3" height="1.3" fill="#ff5252"/><rect x="804.00" y="779.4" width="3" height="1.3" fill="#ff5252"/><rect x="809.00" y="779.4" width="3" height="1.8" fill="#ff5252"/><rect x="814.00" y="779.4" width="3" height="2.6" fill="#ff5252"/><rect x="819.00" y="779.4" width="3" height="3.1" fill="#ff5252"/><rect x="823.00" y="779.4" width="3" height="3.4" fill="#ff5252"/><rect x="828.00" y="779.4" width="3" height="3.1" fill="#ffcdd2"/><rect x="832.00" y="779.4" width="3" height="3.0" fill="#ffcdd2"/><rect x="837.00" y="779.4" width="3" height="2.2" fill="#ffcdd2"/><rect x="841.00" y="779.4" width="3" height="1.6" fill="#ffcdd2"/><rect x="846.00" y="779.4" width="3" height="1.4" fill="#ffcdd2"/><rect x="850.00" y="779.4" width="3" height="1.3" fill="#ffcdd2"/><rect x="855.00" y="777.5" width="3" height="1.9" fill="#26a69a"/><rect x="859.00" y="776.0" width="3" height="3.4" fill="#26a69a"/><rect x="864.00" y="774.7" width="3" height="4.7" fill="#26a69a"/><rect x="869.00" y="774.0" width="3" height="5.4" fill="#26a69a"/><rect x="874.00" y="773.9" width="3" height="5.5" fill="#26a69a"/><rect x="878.00" y="773.3" width="3" height="6.1" fill="#26a69a"/><rect x="883.00" y="772.1" width="3" height="7.3" fill="#26a69a"/><rect x="887.00" y="772.6" width="3" height="6.8" fill="#b2dfdb"/><rect x="892.00" y="772.8" width="3" height="6.6" fill="#b2dfdb"/><rect x="896.00" y="773.7" width="3" height="5.7" fill="#b2dfdb"/><rect x="901.00" y="774.1" width="3" height="5.3" fill="#b2dfdb"/><rect x="905.00" y="775.6" width="3" height="3.8" fill="#b2dfdb"/><rect x="910.00" y="776.9" width="3" height="2.5" fill="#b2dfdb"/><rect x="914.00" y="777.9" width="3" height="1.5" fill="#b2dfdb"/><rect x="919.00" y="778.6" width="3" height="1.3" fill="#b2dfdb"/><rect x="924.00" y="777.3" width="3" height="2.1" fill="#26a69a"/><rect x="929.00" y="775.4" width="3" height="4.0" fill="#26a69a"/><rect x="933.00" y="774.8" width="3" height="4.6" fill="#26a69a"/><rect x="938.00" y="771.0" width="3" height="8.4" fill="#26a69a"/><rect x="942.00" y="767.3" width="3" height="12.1" fill="#26a69a"/><rect x="947.00" y="766.0" width="3" height="13.4" fill="#26a69a"/><rect x="951.00" y="766.6" width="3" height="12.8" fill="#b2dfdb"/><rect x="956.00" y="766.6" width="3" height="12.8" fill="#26a69a"/><rect x="960.00" y="768.2" width="3" height="11.2" fill="#b2dfdb"/><rect x="965.00" y="771.5" width="3" height="7.9" fill="#b2dfdb"/><rect x="969.00" y="774.5" width="3" height="4.9" fill="#b2dfdb"/><rect x="974.00" y="777.7" width="3" height="1.7" fill="#b2dfdb"/><rect x="979.00" y="779.4" width="3" height="1.3" fill="#ff5252"/><rect x="984.00" y="779.4" width="3" height="3.1" fill="#ff5252"/><rect x="988.00" y="779.4" width="3" height="3.3" fill="#ff5252"/><rect x="993.00" y="779.4" width="3" height="2.9" fill="#ffcdd2"/><rect x="997.00" y="779.4" width="3" height="3.1" fill="#ff5252"/><rect x="1002.00" y="779.4" width="3" height="2.8" fill="#ffcdd2"/><rect x="1006.00" y="779.4" width="3" height="3.8" fill="#ff5252"/><rect x="1011.00" y="779.4" width="3" height="5.8" fill="#ff5252"/><rect x="1015.00" y="779.4" width="3" height="7.2" fill="#ff5252"/><rect x="1020.00" y="779.4" width="3" height="10.4" fill="#ff5252"/><rect x="1024.00" y="779.4" width="3" height="10.5" fill="#ff5252"/><rect x="1029.00" y="779.4" width="3" height="7.7" fill="#ffcdd2"/><rect x="1034.00" y="779.4" width="3" height="5.8" fill="#ffcdd2"/><rect x="1039.00" y="779.4" width="3" height="8.0" fill="#ff5252"/><rect x="1043.00" y="779.4" width="3" height="9.0" fill="#ff5252"/><rect x="1048.00" y="779.4" width="3" height="9.5" fill="#ff5252"/><rect x="1052.00" y="779.4" width="3" height="7.4" fill="#ffcdd2"/><rect x="1057.00" y="779.4" width="3" height="8.3" fill="#ff5252"/><rect x="1061.00" y="779.4" width="3" height="9.4" fill="#ff5252"/><rect x="1066.00" y="779.4" width="3" height="8.3" fill="#ffcdd2"/><rect x="1070.00" y="779.4" width="3" height="5.7" fill="#ffcdd2"/><rect x="1075.00" y="779.4" width="3" height="3.2" fill="#ffcdd2"/><rect x="1079.00" y="779.4" width="3" height="2.5" fill="#ffcdd2"/><rect x="1084.00" y="779.4" width="3" height="2.0" fill="#ffcdd2"/><rect x="1089.00" y="778.9" width="3" height="1.3" fill="#26a69a"/><rect x="1094.00" y="777.9" width="3" height="1.5" fill="#26a69a"/><rect x="1098.00" y="777.1" width="3" height="2.3" fill="#26a69a"/><rect x="1103.00" y="772.9" width="3" height="6.5" fill="#26a69a"/><rect x="1107.00" y="767.4" width="3" height="12.0" fill="#26a69a"/><rect x="1112.00" y="762.0" width="3" height="17.4" fill="#26a69a"/><rect x="1116.00" y="759.9" width="3" height="19.5" fill="#26a69a"/><rect x="1121.00" y="758.5" width="3" height="20.9" fill="#26a69a"/><rect x="1125.00" y="757.9" width="3" height="21.5" fill="#26a69a"/><rect x="1130.00" y="762.1" width="3" height="17.3" fill="#b2dfdb"/><rect x="1134.00" y="766.5" width="3" height="12.9" fill="#b2dfdb"/><rect x="1139.00" y="768.7" width="3" height="10.7" fill="#b2dfdb"/><rect x="1144.00" y="772.4" width="3" height="7.0" fill="#b2dfdb"/><rect x="1149.00" y="773.1" width="3" height="6.3" fill="#b2dfdb"/><rect x="1153.00" y="773.9" width="3" height="5.5" fill="#b2dfdb"/><rect x="1158.00" y="776.8" width="3" height="2.6" fill="#b2dfdb"/><rect x="1162.00" y="779.4" width="3" height="1.3" fill="#ff5252"/><rect x="1167.00" y="779.4" width="3" height="2.5" fill="#ff5252"/><rect x="1171.00" y="779.4" width="3" height="4.2" fill="#ff5252"/><rect x="1176.00" y="779.4" width="3" height="6.2" fill="#ff5252"/><rect x="1180.00" y="779.4" width="3" height="12.2" fill="#ff5252"/><rect x="1185.00" y="779.4" width="3" height="15.0" fill="#ff5252"/><rect x="1189.00" y="779.4" width="3" height="15.2" fill="#ff5252"/><rect x="1194.00" y="779.4" width="3" height="16.1" fill="#ff5252"/><rect x="1199.00" y="779.4" width="3" height="17.4" fill="#ff5252"/><rect x="1204.00" y="779.4" width="3" height="15.8" fill="#ffcdd2"/><rect x="1208.00" y="779.4" width="3" height="13.6" fill="#ffcdd2"/><rect x="1213.00" y="779.4" width="3" height="8.9" fill="#ffcdd2"/><rect x="1217.00" y="779.4" width="3" height="5.4" fill="#ffcdd2"/><rect x="1222.00" y="779.1" width="3" height="1.3" fill="#26a69a"/><rect x="1226.00" y="774.9" width="3" height="4.5" fill="#26a69a"/><rect x="1231.00" y="771.8" width="3" height="7.6" fill="#26a69a"/><rect x="1235.00" y="771.6" width="3" height="7.8" fill="#26a69a"/><rect x="1240.00" y="772.0" width="3" height="7.4" fill="#b2dfdb"/><rect x="1244.00" y="772.9" width="3" height="6.5" fill="#b2dfdb"/><rect x="1249.00" y="775.6" width="3" height="3.8" fill="#b2dfdb"/><rect x="1254.00" y="775.2" width="3" height="4.2" fill="#26a69a"/><rect x="1259.00" y="775.2" width="3" height="4.2" fill="#26a69a"/><rect x="1263.00" y="772.2" width="3" height="7.2" fill="#26a69a"/><rect x="1268.00" y="771.7" width="3" height="7.7" fill="#26a69a"/><rect x="1272.00" y="771.3" width="3" height="8.1" fill="#26a69a"/><rect x="1277.00" y="773.5" width="3" height="5.9" fill="#b2dfdb"/><rect x="1281.00" y="773.8" width="3" height="5.6" fill="#b2dfdb"/><rect x="1286.00" y="775.3" width="3" height="4.1" fill="#b2dfdb"/><rect x="1290.00" y="778.1" width="3" height="1.3" fill="#b2dfdb"/><rect x="1295.00" y="779.4" width="3" height="2.7" fill="#ff5252"/><rect x="1299.00" y="779.4" width="3" height="4.4" fill="#ff5252"/><rect x="1304.00" y="779.4" width="3" height="4.1" fill="#ffcdd2"/><rect x="1309.00" y="779.4" width="3" height="4.1" fill="#ffcdd2"/><rect x="1314.00" y="779.4" width="3" height="5.2" fill="#ff5252"/><rect x="1318.00" y="779.4" width="3" height="2.1" fill="#ffcdd2"/><rect x="1323.00" y="779.4" width="3" height="3.2" fill="#ff5252"/><rect x="1327.00" y="779.4" width="3" height="6.2" fill="#ff5252"/><rect x="1332.00" y="779.4" width="3" height="6.0" fill="#ffcdd2"/><rect x="1336.00" y="779.4" width="3" height="7.2" fill="#ff5252"/><rect x="1341.00" y="779.4" width="3" height="9.8" fill="#ff5252"/><rect x="1345.00" y="779.4" width="3" height="14.7" fill="#ff5252"/><rect x="1350.00" y="779.4" width="3" height="19.7" fill="#ff5252"/><rect x="1354.00" y="779.4" width="3" height="20.8" fill="#ff5252"/><rect x="1359.00" y="779.4" width="3" height="20.4" fill="#ffcdd2"/><rect x="1364.00" y="779.4" width="3" height="20.0" fill="#ffcdd2"/><rect x="1369.00" y="779.4" width="3" height="18.4" fill="#ffcdd2"/><rect x="1373.00" y="779.4" width="3" height="16.7" fill="#ffcdd2"/><rect x="1378.00" y="779.4" width="3" height="13.5" fill="#ffcdd2"/><rect x="1382.00" y="779.4" width="3" height="10.9" fill="#ffcdd2"/><rect x="1387.00" y="779.4" width="3" height="7.5" fill="#ffcdd2"/><rect x="1391.00" y="779.4" width="3" height="7.4" fill="#ffcdd2"/><rect x="1396.00" y="779.4" width="3" height="9.9" fill="#ff5252"/><rect x="1400.00" y="779.4" width="3" height="13.2" fill="#ff5252"/><rect x="1405.00" y="779.4" width="3" height="14.7" fill="#ff5252"/><rect x="1409.00" y="779.4" width="3" height="15.1" fill="#ff5252"/><rect x="1414.00" y="779.4" width="3" height="14.8" fill="#ffcdd2"/><rect x="1419.00" y="779.4" width="3" height="13.5" fill="#ffcdd2"/><rect x="1424.00" y="779.4" width="3" height="9.3" fill="#ffcdd2"/><rect x="1428.00" y="779.4" width="3" height="7.5" fill="#ffcdd2"/><rect x="1433.00" y="779.4" width="3" height="6.3" fill="#ffcdd2"/><rect x="1437.00" y="779.4" width="3" height="3.7" fill="#ffcdd2"/><rect x="1442.00" y="779.4" width="3" height="1.3" fill="#ffcdd2"/></g>
<polyline points="8.4,781.9 13.4,781.8 17.6,781.5 22.6,780.7 26.8,780.1 31.8,779.3 35.9,779.0 40.9,778.5 45.1,778.0 50.1,777.8 54.3,777.6 59.3,777.6 63.4,777.7 68.4,777.6 72.6,777.6 77.6,777.3 81.8,776.7 86.8,775.9 90.9,775.3 95.9,774.9 100.1,774.7 105.1,775.1 109.3,775.5 114.3,775.6 118.4,775.8 123.4,776.0 127.6,776.0 132.6,775.9 136.8,775.2 141.8,774.4 145.9,773.1 150.9,772.0 155.1,770.1 160.1,768.9 164.3,767.5 169.3,766.6 173.4,764.3 178.4,761.4 182.6,756.5 187.6,750.7 191.8,747.5 196.8,746.9 200.9,746.4 205.9,744.0 210.1,738.3 215.1,730.6 219.3,730.3 224.3,728.2 228.4,723.7 233.4,721.5 237.6,721.1 242.6,720.4 246.8,719.8 251.8,721.6 255.9,726.7 260.9,728.1 265.1,729.1 270.1,735.5 274.3,746.0 279.3,754.2 283.4,760.8 288.4,764.9 292.6,769.6 297.6,773.9 301.8,777.0 306.8,780.0 310.9,783.3 315.9,784.3 320.1,783.2 325.1,780.6 329.3,777.1 334.3,773.5 338.4,770.9 343.4,767.8 347.6,767.8 352.6,767.5 356.8,769.1 361.8,768.4 365.9,765.1 370.9,759.9 375.1,756.2 380.1,753.5 384.3,750.7 389.3,748.0 393.4,749.1 398.4,750.9 402.6,756.0 407.6,760.0 411.8,764.8 416.8,766.9 420.9,770.3 425.9,775.3 430.1,778.7 435.1,784.4 439.3,788.0 444.3,788.9 448.4,789.6 453.4,791.6 457.6,793.3 462.6,794.2 466.8,795.0 471.8,793.9 475.9,790.6 480.9,788.0 485.1,787.7 490.1,788.4 494.3,789.0 499.3,789.7 503.4,792.1 508.4,794.9 512.6,797.4 517.6,799.5 521.8,800.8 526.8,802.9 530.9,806.9 535.9,809.5 540.1,811.9 545.1,812.8 549.3,813.1 554.3,812.2 558.4,810.8 563.4,809.5 567.6,807.6 572.6,806.9 576.8,807.0 581.8,806.5 585.9,805.0 590.9,804.6 595.1,804.3 600.1,803.6 604.3,802.6 609.3,801.7 613.4,800.6 618.4,799.0 622.6,797.4 627.6,797.9 631.8,798.1 636.8,798.0 640.9,797.4 645.9,796.8 650.1,796.2 655.1,795.5 659.3,794.9 664.3,794.0 668.4,791.6 673.4,788.7 677.6,786.0 682.6,784.1 686.8,783.0 691.8,781.1 695.9,779.9 700.9,779.4 705.1,779.2 710.1,776.5 714.3,774.4 719.3,772.7 723.4,771.5 728.4,769.7 732.6,769.6 737.6,768.9 741.8,768.8 746.8,769.6 750.9,770.3 755.9,770.4 760.1,771.0 765.1,772.1 769.3,772.8 774.3,771.8 778.4,770.9 783.4,770.5 787.6,770.3 792.6,770.3 796.8,770.8 801.8,771.3 805.9,771.8 810.9,773.5 815.1,775.0 820.1,776.2 824.3,777.3 829.3,777.8 833.4,778.4 838.4,778.2 842.6,778.0 847.6,778.2 851.8,777.2 856.8,774.4 860.9,772.2 865.9,769.6 870.1,767.6 875.1,766.1 879.3,764.0 884.3,760.9 888.4,759.7 893.4,758.3 897.6,757.8 902.6,756.9 906.8,757.4 911.8,758.1 915.9,758.7 920.9,759.2 925.1,757.3 930.1,754.5 934.3,752.8 939.3,746.9 943.4,740.1 948.4,735.5 952.6,732.9 957.6,729.6 961.8,728.5 966.8,729.7 970.9,731.6 975.9,734.4 980.1,736.7 985.1,740.0 989.3,741.1 994.3,741.4 998.4,742.4 1003.4,742.8 1007.6,744.8 1012.6,748.2 1016.8,751.5 1021.8,757.2 1025.9,759.9 1030.9,759.1 1035.1,758.7 1040.1,762.9 1044.3,766.1 1049.3,768.9 1053.4,768.8 1058.4,771.7 1062.6,775.1 1067.6,776.1 1071.8,774.9 1076.8,773.2 1080.9,773.2 1085.9,773.2 1090.1,770.6 1095.1,769.2 1099.3,767.8 1104.3,761.9 1108.4,753.5 1113.4,743.7 1117.6,736.7 1122.6,730.1 1126.8,724.1 1131.8,724.0 1135.9,725.2 1140.9,724.8 1145.1,726.6 1150.1,725.8 1154.3,725.2 1159.3,727.4 1163.4,730.3 1168.4,733.3 1172.6,736.1 1177.6,739.6 1181.8,748.6 1186.8,755.2 1190.9,759.1 1195.9,764.0 1200.1,769.8 1205.1,772.1 1209.3,773.3 1214.3,770.8 1218.4,768.6 1223.4,762.9 1227.6,757.6 1232.6,752.6 1236.8,750.3 1241.8,748.9 1245.9,748.2 1250.9,750.0 1255.1,748.6 1260.1,747.5 1264.3,742.7 1269.3,740.2 1273.4,737.8 1278.4,738.6 1282.6,737.5 1287.6,737.9 1291.8,740.4 1296.8,745.0 1300.9,747.8 1305.9,748.6 1310.1,749.6 1315.1,752.0 1319.3,749.4 1324.3,751.3 1328.4,755.8 1333.4,757.1 1337.6,760.1 1342.6,765.1 1346.8,773.7 1351.8,783.7 1355.9,789.9 1360.9,794.6 1365.1,799.2 1370.1,802.2 1374.3,804.8 1379.3,804.9 1383.4,805.0 1388.4,803.5 1392.6,805.2 1397.6,810.3 1401.8,816.8 1406.8,822.0 1410.9,826.2 1415.9,829.6 1420.1,831.7 1425.1,829.7 1429.3,829.9 1434.3,830.2 1438.4,828.5 1443.4,825.7" fill="none" stroke="#2962ff" stroke-width="1.05" stroke-linejoin="round" clip-path="url(#cd)"/>
<polyline points="8.4,780.6 13.4,780.8 17.6,781.0 22.6,780.9 26.8,780.7 31.8,780.5 35.9,780.2 40.9,779.8 45.1,779.5 50.1,779.1 54.3,778.8 59.3,778.6 63.4,778.4 68.4,778.2 72.6,778.1 77.6,778.0 81.8,777.7 86.8,777.3 90.9,776.9 95.9,776.5 100.1,776.2 105.1,776.0 109.3,775.9 114.3,775.8 118.4,775.8 123.4,775.9 127.6,775.9 132.6,775.9 136.8,775.7 141.8,775.5 145.9,775.0 150.9,774.4 155.1,773.5 160.1,772.6 164.3,771.6 169.3,770.6 173.4,769.3 178.4,767.8 182.6,765.5 187.6,762.6 191.8,759.6 196.8,757.0 200.9,754.9 205.9,752.7 210.1,749.8 215.1,746.0 219.3,742.9 224.3,739.9 228.4,736.7 233.4,733.6 237.6,731.1 242.6,729.0 246.8,727.1 251.8,726.0 255.9,726.2 260.9,726.6 265.1,727.1 270.1,728.7 274.3,732.2 279.3,736.6 283.4,741.4 288.4,746.1 292.6,750.8 297.6,755.4 301.8,759.8 306.8,763.8 310.9,767.7 315.9,771.0 320.1,773.4 325.1,774.9 329.3,775.3 334.3,775.0 338.4,774.2 343.4,772.9 347.6,771.9 352.6,771.0 356.8,770.6 361.8,770.2 365.9,769.2 370.9,767.3 375.1,765.1 380.1,762.8 384.3,760.4 389.3,757.9 393.4,756.1 398.4,755.1 402.6,755.3 407.6,756.2 411.8,757.9 416.8,759.7 420.9,761.8 425.9,764.5 430.1,767.4 435.1,770.8 439.3,774.2 444.3,777.2 448.4,779.6 453.4,782.0 457.6,784.3 462.6,786.3 466.8,788.0 471.8,789.2 475.9,789.5 480.9,789.2 485.1,788.9 490.1,788.8 494.3,788.8 499.3,789.0 503.4,789.6 508.4,790.7 512.6,792.0 517.6,793.5 521.8,795.0 526.8,796.6 530.9,798.6 535.9,800.8 540.1,803.0 545.1,805.0 549.3,806.6 554.3,807.7 558.4,808.4 563.4,808.6 567.6,808.4 572.6,808.1 576.8,807.9 581.8,807.6 585.9,807.1 590.9,806.6 595.1,806.1 600.1,805.6 604.3,805.0 609.3,804.3 613.4,803.6 618.4,802.7 622.6,801.6 627.6,800.9 631.8,800.3 636.8,799.9 640.9,799.4 645.9,798.9 650.1,798.3 655.1,797.8 659.3,797.2 664.3,796.6 668.4,795.6 673.4,794.2 677.6,792.6 682.6,790.9 686.8,789.3 691.8,787.7 695.9,786.1 700.9,784.8 705.1,783.6 710.1,782.2 714.3,780.6 719.3,779.1 723.4,777.5 728.4,776.0 732.6,774.7 737.6,773.5 741.8,772.6 746.8,772.0 750.9,771.7 755.9,771.4 760.1,771.3 765.1,771.5 769.3,771.8 774.3,771.8 778.4,771.6 783.4,771.4 787.6,771.2 792.6,771.0 796.8,771.0 801.8,771.0 805.9,771.2 810.9,771.6 815.1,772.3 820.1,773.1 824.3,773.9 829.3,774.7 833.4,775.5 838.4,776.0 842.6,776.4 847.6,776.8 851.8,776.8 856.8,776.4 860.9,775.5 865.9,774.3 870.1,773.0 875.1,771.6 879.3,770.1 884.3,768.2 888.4,766.5 893.4,764.9 897.6,763.5 902.6,762.1 906.8,761.2 911.8,760.6 915.9,760.2 920.9,760.0 925.1,759.5 930.1,758.5 934.3,757.3 939.3,755.2 943.4,752.2 948.4,748.9 952.6,745.7 957.6,742.5 961.8,739.7 966.8,737.7 970.9,736.5 975.9,736.0 980.1,736.2 985.1,736.9 989.3,737.8 994.3,738.5 998.4,739.3 1003.4,740.0 1007.6,740.9 1012.6,742.4 1016.8,744.2 1021.8,746.8 1025.9,749.4 1030.9,751.4 1035.1,752.8 1040.1,754.8 1044.3,757.1 1049.3,759.5 1053.4,761.3 1058.4,763.4 1062.6,765.8 1067.6,767.8 1071.8,769.2 1076.8,770.0 1080.9,770.7 1085.9,771.2 1090.1,771.1 1095.1,770.7 1099.3,770.1 1104.3,768.5 1108.4,765.5 1113.4,761.1 1117.6,756.2 1122.6,751.0 1126.8,745.6 1131.8,741.3 1135.9,738.1 1140.9,735.4 1145.1,733.7 1150.1,732.1 1154.3,730.7 1159.3,730.1 1163.4,730.1 1168.4,730.7 1172.6,731.8 1177.6,733.4 1181.8,736.4 1186.8,740.2 1190.9,744.0 1195.9,748.0 1200.1,752.3 1205.1,756.3 1209.3,759.7 1214.3,761.9 1218.4,763.2 1223.4,763.2 1227.6,762.0 1232.6,760.1 1236.8,758.2 1241.8,756.3 1245.9,754.7 1250.9,753.8 1255.1,752.7 1260.1,751.7 1264.3,749.9 1269.3,748.0 1273.4,745.9 1278.4,744.5 1282.6,743.1 1287.6,742.0 1291.8,741.7 1296.8,742.4 1300.9,743.5 1305.9,744.5 1310.1,745.5 1315.1,746.8 1319.3,747.3 1324.3,748.1 1328.4,749.6 1333.4,751.1 1337.6,752.9 1342.6,755.4 1346.8,759.0 1351.8,764.0 1355.9,769.2 1360.9,774.3 1365.1,779.2 1370.1,783.8 1374.3,788.0 1379.3,791.4 1383.4,794.1 1388.4,796.0 1392.6,797.8 1397.6,800.3 1401.8,803.6 1406.8,807.3 1410.9,811.1 1415.9,814.8 1420.1,818.2 1425.1,820.5 1429.3,822.4 1434.3,823.9 1438.4,824.8 1443.4,825.0" fill="none" stroke="#e8670a" stroke-width="1.05" stroke-linejoin="round" clip-path="url(#cd)"/>
<text x="1561.5" y="549.0" font-size="11.6" fill="#cfcfcf" stroke="#cfcfcf" stroke-width="0.3" textLength="17.2" lengthAdjust="spacingAndGlyphs">0.0</text>
<text x="1561.5" y="512.1" font-size="11.6" fill="#cfcfcf" stroke="#cfcfcf" stroke-width="0.3" textLength="46" lengthAdjust="spacingAndGlyphs">10,000.0</text>
<text x="1561.5" y="475.3" font-size="11.6" fill="#cfcfcf" stroke="#cfcfcf" stroke-width="0.3" textLength="46" lengthAdjust="spacingAndGlyphs">20,000.0</text>
<text x="1561.5" y="438.4" font-size="11.6" fill="#cfcfcf" stroke="#cfcfcf" stroke-width="0.3" textLength="46" lengthAdjust="spacingAndGlyphs">30,000.0</text>
<text x="1561.5" y="401.6" font-size="11.6" fill="#cfcfcf" stroke="#cfcfcf" stroke-width="0.3" textLength="46" lengthAdjust="spacingAndGlyphs">40,000.0</text>
<text x="1561.5" y="364.8" font-size="11.6" fill="#cfcfcf" stroke="#cfcfcf" stroke-width="0.3" textLength="46" lengthAdjust="spacingAndGlyphs">50,000.0</text>
<text x="1561.5" y="327.9" font-size="11.6" fill="#cfcfcf" stroke="#cfcfcf" stroke-width="0.3" textLength="46" lengthAdjust="spacingAndGlyphs">60,000.0</text>
<text x="1561.5" y="254.2" font-size="11.6" fill="#cfcfcf" stroke="#cfcfcf" stroke-width="0.3" textLength="46" lengthAdjust="spacingAndGlyphs">80,000.0</text>
<text x="1561.5" y="217.3" font-size="11.6" fill="#cfcfcf" stroke="#cfcfcf" stroke-width="0.3" textLength="46" lengthAdjust="spacingAndGlyphs">90,000.0</text>
<text x="1561.5" y="180.5" font-size="11.6" fill="#cfcfcf" stroke="#cfcfcf" stroke-width="0.3" textLength="52.3" lengthAdjust="spacingAndGlyphs">100,000.0</text>
<text x="1561.5" y="143.7" font-size="11.6" fill="#cfcfcf" stroke="#cfcfcf" stroke-width="0.3" textLength="52.3" lengthAdjust="spacingAndGlyphs">110,000.0</text>
<text x="1561.5" y="106.8" font-size="11.6" fill="#cfcfcf" stroke="#cfcfcf" stroke-width="0.3" textLength="52.3" lengthAdjust="spacingAndGlyphs">120,000.0</text>
<text x="1561.5" y="69.9" font-size="11.6" fill="#cfcfcf" stroke="#cfcfcf" stroke-width="0.3" textLength="52.3" lengthAdjust="spacingAndGlyphs">130,000.0</text>
<text x="1561.5" y="599.2" font-size="11.6" fill="#cfcfcf" stroke="#cfcfcf" stroke-width="0.3" textLength="29.6" lengthAdjust="spacingAndGlyphs">80.00</text>
<text x="1561.5" y="635.4" font-size="11.6" fill="#cfcfcf" stroke="#cfcfcf" stroke-width="0.3" textLength="29.6" lengthAdjust="spacingAndGlyphs">60.00</text>
<text x="1561.5" y="672.6" font-size="11.6" fill="#cfcfcf" stroke="#cfcfcf" stroke-width="0.3" textLength="29.6" lengthAdjust="spacingAndGlyphs">40.00</text>
<text x="1561.5" y="729.0" font-size="11.6" fill="#cfcfcf" stroke="#cfcfcf" stroke-width="0.3" textLength="46" lengthAdjust="spacingAndGlyphs">10,000.0</text>
<text x="1561.5" y="783.0" font-size="11.6" fill="#cfcfcf" stroke="#cfcfcf" stroke-width="0.3" textLength="17.2" lengthAdjust="spacingAndGlyphs">0.0</text>
<text x="1561.5" y="835.7" font-size="11.6" fill="#cfcfcf" stroke="#cfcfcf" stroke-width="0.3" textLength="52.5" lengthAdjust="spacingAndGlyphs">−10,000.0</text>
<rect x="1553" y="275.8" width="60" height="31.2" fill="#089981"/>
<text x="1561" y="287.9" font-size="11.6" fill="#ffffff" stroke="#ffffff" stroke-width="0.3" textLength="46" lengthAdjust="spacingAndGlyphs">71,108.3</text>
<text x="1561" y="301.7" font-size="11.6" fill="#c9ebe5" stroke="#c9ebe5" stroke-width="0.3" textLength="46" lengthAdjust="spacingAndGlyphs">06:00:25</text>
<rect x="1553" y="307" width="60" height="17" fill="#ffeb3b"/>
<text x="1561" y="318.2" font-size="11.6" fill="#0f0f0f" stroke="#0f0f0f" stroke-width="0.3" textLength="46" lengthAdjust="spacingAndGlyphs">69,000.0</text>
<rect x="1555.9" y="30.8" width="64.2" height="26.6" rx="4.5" fill="none" stroke="#474747" stroke-width="1.2"/>
<text x="1564.8" y="48.9" font-size="11.8" fill="#e4e4e4" stroke="#e4e4e4" stroke-width="0.3" textLength="28.5" lengthAdjust="spacingAndGlyphs">USDT</text>
<text x="67.4" y="861.2" font-size="11.6" fill="#cfcfcf" stroke="#cfcfcf" stroke-width="0.3" text-anchor="middle" textLength="16" lengthAdjust="spacingAndGlyphs">Jul</text>
<text x="186.6" y="861.2" font-size="11.9" fill="#cfcfcf" stroke="#cfcfcf" stroke-width="0.6" text-anchor="middle" textLength="26.6" lengthAdjust="spacingAndGlyphs">2021</text>
<text x="305.8" y="861.2" font-size="11.6" fill="#cfcfcf" stroke="#cfcfcf" stroke-width="0.3" text-anchor="middle" textLength="16" lengthAdjust="spacingAndGlyphs">Jul</text>
<text x="424.9" y="861.2" font-size="11.9" fill="#cfcfcf" stroke="#cfcfcf" stroke-width="0.6" text-anchor="middle" textLength="26.6" lengthAdjust="spacingAndGlyphs">2022</text>
<text x="544.1" y="861.2" font-size="11.6" fill="#cfcfcf" stroke="#cfcfcf" stroke-width="0.3" text-anchor="middle" textLength="16" lengthAdjust="spacingAndGlyphs">Jul</text>
<text x="663.3" y="861.2" font-size="11.9" fill="#cfcfcf" stroke="#cfcfcf" stroke-width="0.6" text-anchor="middle" textLength="26.6" lengthAdjust="spacingAndGlyphs">2023</text>
<text x="782.4" y="861.2" font-size="11.6" fill="#cfcfcf" stroke="#cfcfcf" stroke-width="0.3" text-anchor="middle" textLength="16" lengthAdjust="spacingAndGlyphs">Jul</text>
<text x="901.6" y="861.2" font-size="11.9" fill="#cfcfcf" stroke="#cfcfcf" stroke-width="0.6" text-anchor="middle" textLength="26.6" lengthAdjust="spacingAndGlyphs">2024</text>
<text x="1020.8" y="861.2" font-size="11.6" fill="#cfcfcf" stroke="#cfcfcf" stroke-width="0.3" text-anchor="middle" textLength="16" lengthAdjust="spacingAndGlyphs">Jul</text>
<text x="1144.1" y="861.2" font-size="11.9" fill="#cfcfcf" stroke="#cfcfcf" stroke-width="0.6" text-anchor="middle" textLength="26.6" lengthAdjust="spacingAndGlyphs">2025</text>
<text x="1263.3" y="861.2" font-size="11.6" fill="#cfcfcf" stroke="#cfcfcf" stroke-width="0.3" text-anchor="middle" textLength="16" lengthAdjust="spacingAndGlyphs">Jul</text>
<text x="1382.4" y="861.2" font-size="11.9" fill="#cfcfcf" stroke="#cfcfcf" stroke-width="0.6" text-anchor="middle" textLength="26.6" lengthAdjust="spacingAndGlyphs">2026</text>
<text x="1501.6" y="861.2" font-size="11.6" fill="#cfcfcf" stroke="#cfcfcf" stroke-width="0.3" text-anchor="middle" textLength="16" lengthAdjust="spacingAndGlyphs">Jul</text>
<text x="18.2" y="45.5" font-size="11.4" fill="#cfcfcf" stroke="#cfcfcf" stroke-width="0.3" textLength="132.5" lengthAdjust="spacingAndGlyphs">Bitcoin/USDT · 1W · OKX</text>
<text x="158.5" y="45.5" font-size="11.4" fill="#cfcfcf" stroke="#cfcfcf" stroke-width="0.3">O</text>
<text x="166.5" y="45.5" font-size="11.4" fill="#089981" stroke="#089981" stroke-width="0.3" textLength="46.3" lengthAdjust="spacingAndGlyphs">69,030.0</text>
<text x="219.8" y="45.5" font-size="11.4" fill="#cfcfcf" stroke="#cfcfcf" stroke-width="0.3">H</text>
<text x="228" y="45.5" font-size="11.4" fill="#089981" stroke="#089981" stroke-width="0.3" textLength="46.5" lengthAdjust="spacingAndGlyphs">73,807.2</text>
<text x="281.5" y="45.5" font-size="11.4" fill="#cfcfcf" stroke="#cfcfcf" stroke-width="0.3">L</text>
<text x="287.4" y="45.5" font-size="11.4" fill="#089981" stroke="#089981" stroke-width="0.3" textLength="46.3" lengthAdjust="spacingAndGlyphs">67,730.1</text>
<text x="341.2" y="45.5" font-size="11.4" fill="#cfcfcf" stroke="#cfcfcf" stroke-width="0.3">C</text>
<text x="348.8" y="45.5" font-size="11.4" fill="#089981" stroke="#089981" stroke-width="0.3" textLength="46.2" lengthAdjust="spacingAndGlyphs">71,108.3</text>
<text x="402.4" y="45.5" font-size="11.4" fill="#089981" stroke="#089981" stroke-width="0.3" textLength="95.8" lengthAdjust="spacingAndGlyphs">+2,078.3 (+3.01%)</text>
<text x="18.4" y="585.5" font-size="11.4" fill="#cfcfcf" stroke="#cfcfcf" stroke-width="0.3" textLength="75.4" lengthAdjust="spacingAndGlyphs">RSI (14, close)</text>
<text x="102.3" y="585.5" font-size="11.4" fill="#7e57c2" stroke="#7e57c2" stroke-width="0.3" textLength="29" lengthAdjust="spacingAndGlyphs">38.40</text>
<text x="138.7" y="585.5" font-size="11.4" fill="#f2d53c" stroke="#f2d53c" stroke-width="0.3" textLength="29" lengthAdjust="spacingAndGlyphs">33.61</text>
<text x="18" y="723.5" font-size="11.4" fill="#cfcfcf" stroke="#cfcfcf" stroke-width="0.3" textLength="110.6" lengthAdjust="spacingAndGlyphs">MACD (12, 26, close)</text>
<text x="136.4" y="723.5" font-size="11.4" fill="#ffcdd2" stroke="#ffcdd2" stroke-width="0.3" textLength="36" lengthAdjust="spacingAndGlyphs">−146.7</text>
<text x="180" y="723.5" font-size="11.4" fill="#2962ff" stroke="#2962ff" stroke-width="0.3" textLength="46.2" lengthAdjust="spacingAndGlyphs">−8,682.7</text>
<text x="234" y="723.5" font-size="11.4" fill="#e8670a" stroke="#e8670a" stroke-width="0.3" textLength="45.8" lengthAdjust="spacingAndGlyphs">−8,536.0</text>
<text x="10" y="18.7" font-size="11.6" font-weight="bold" fill="#e6e6e6" textLength="409.5" lengthAdjust="spacingAndGlyphs">jakubdziadkowiec created with TradingView.com, Apr 12, 2026 19:59 UTC+2</text>
<path d="M11.9 893.1 H23.9 V908 H18 V898.9 H11.9 Z" fill="#e2e2e2"/>
<circle cx="29.1" cy="896" r="2.75" fill="#e2e2e2"/>
<path d="M33.2 893.1 H41.9 L36.6 908 H28.8 Z" fill="#e2e2e2"/>
<text x="49.6" y="908" font-size="20.5" fill="#e2e2e2" stroke="#e2e2e2" stroke-width="0.75" stroke-linejoin="round" textLength="119.6" lengthAdjust="spacingAndGlyphs">TradingView</text>
</svg>
</body></html>
